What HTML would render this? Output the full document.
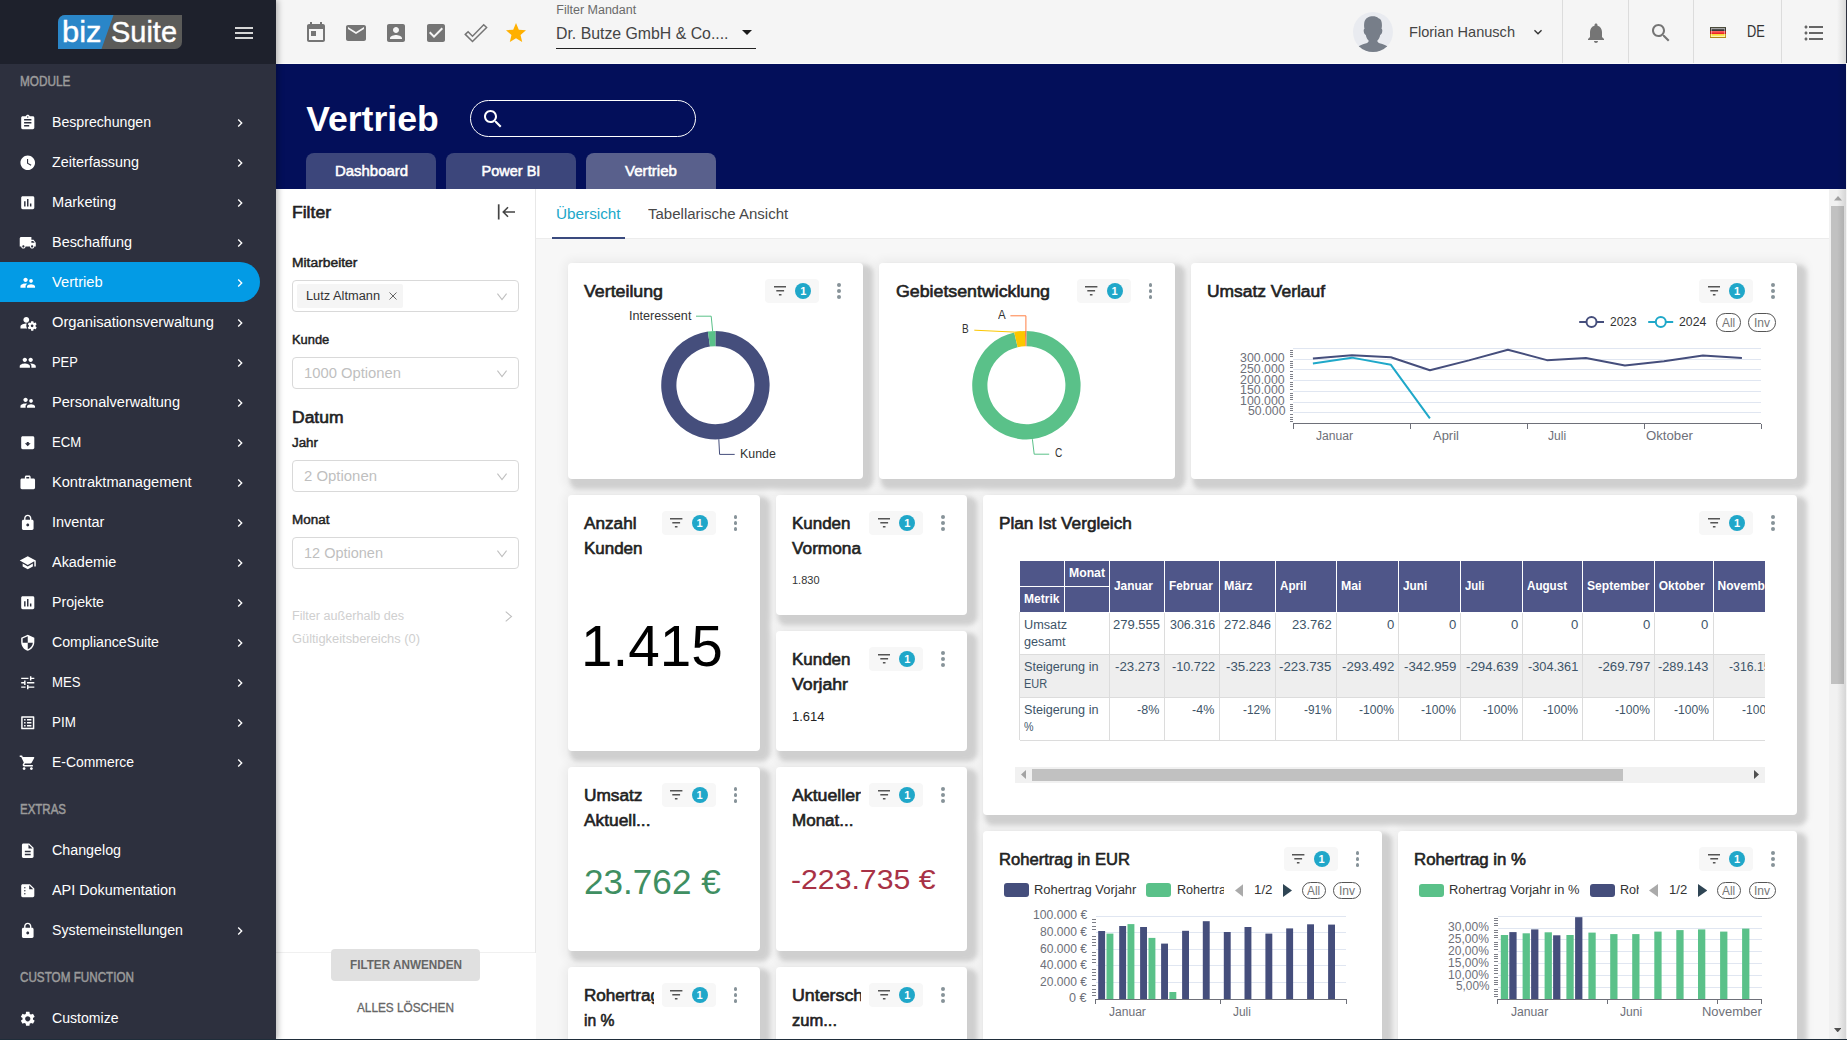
<!DOCTYPE html>
<html><head><meta charset="utf-8"><title>Vertrieb</title><style>
html,body{margin:0;padding:0;overflow:hidden}
#root{position:absolute;left:0;top:0;width:1847px;height:1040px;overflow:hidden}
body{width:1847px;height:1040px;overflow:hidden;position:relative;background:#f7f7f7;font-family:"Liberation Sans",sans-serif;}
.a{position:absolute;display:block}
.t{position:absolute;white-space:pre;transform-origin:0 50%;display:block}
.card{position:absolute;background:#fff;border-radius:4px;box-shadow:6px 6px 4px 4px rgba(0,0,0,0.13), 3px 3px 8px 8px rgba(0,0,0,0.04)}
</style></head><body><div id="root">
<div class="a" style="left:276px;top:0px;width:1571px;height:64px;background:#f5f5f5;"></div>
<div class="a" style="left:276px;top:64px;width:1571px;height:125px;background:#030f5a;"></div>
<div class="a" style="left:276px;top:189px;width:260px;height:851px;background:#fff;"></div>
<div class="a" style="left:535px;top:189px;width:1px;height:764px;background:#e8e8e8;"></div>
<div class="a" style="left:536px;top:189px;width:1293px;height:49px;background:#fff;"></div>
<div class="a" style="left:536px;top:238px;width:1293px;height:1px;background:#ececec;"></div>
<div class="a" style="left:0px;top:0px;width:276px;height:1040px;background:#2d303e;box-shadow:2px 0 6px rgba(0,0,0,0.28);z-index:5"></div>
<div class="a" style="left:0;top:0;width:276px;height:1040px;z-index:6">
<div class="a" style="left:0px;top:0px;width:276px;height:64px;background:#1e212c;"></div>
<svg class="a" style="left:58px;top:15px;" width="124" height="34" viewBox="0 0 124 34"><defs><clipPath id="lg"><path d="M7 0H124V27a7 7 0 0 1-7 7H0V7a7 7 0 0 1 7-7z"/></clipPath></defs><g clip-path="url(#lg)"><rect width="124" height="34" fill="#5b5b59"/><path d="M0 0H55.500L43.500 34H0z" fill="#2a86c8"/></g></svg>
<span class="t" style="left:61.60px;top:17.00px;font-size:29.5px;line-height:29.5px;color:#fff;transform:scaleX(1.0472);-webkit-text-stroke:0.400px #fff;">biz</span>
<span class="t" style="left:110.50px;top:17.00px;font-size:29.5px;line-height:29.5px;color:#fff;transform:scaleX(0.9814);-webkit-text-stroke:0.400px #fff;">Suite</span>
<svg class="a" style="left:232.0px;top:21.0px;" width="24" height="24" viewBox="0 0 24 24"><path fill="#d6d6d6" d="M3 18h18v-2H3v2zm0-5h18v-2H3v2zm0-7v2h18V6H3z"/></svg>
<span class="t" style="left:20.30px;top:74.00px;font-size:14px;line-height:14px;color:#9b9b9b;transform:scaleX(0.8413);-webkit-text-stroke:0.50px #9b9b9b;">MODULE</span>
<span class="t" style="left:20.10px;top:802.00px;font-size:14px;line-height:14px;color:#9b9b9b;transform:scaleX(0.8212);-webkit-text-stroke:0.50px #9b9b9b;">EXTRAS</span>
<span class="t" style="left:20.10px;top:970.00px;font-size:14px;line-height:14px;color:#9b9b9b;transform:scaleX(0.8344);-webkit-text-stroke:0.50px #9b9b9b;">CUSTOM FUNCTION</span>
<div class="a" style="left:0px;top:262px;width:260px;height:40px;background:#039be5;border-radius:0 20px 20px 0"></div>
<svg class="a" style="left:19.35px;top:114.05px;" width="17.5" height="17.5" viewBox="0 0 24 24"><path fill="#fff" d="M19 3h-4.18C14.4 1.84 13.3 1 12 1c-1.3 0-2.4.84-2.82 2H5c-1.1 0-2 .9-2 2v14c0 1.1.9 2 2 2h14c1.1 0 2-.9 2-2V5c0-1.1-.9-2-2-2zm-7 0c.55 0 1 .45 1 1s-.45 1-1 1-1-.45-1-1 .45-1 1-1zm2 14H7v-2h7v2zm3-4H7v-2h10v2zm0-4H7V7h10v2z"/></svg>
<span class="t" style="left:52.30px;top:114.00px;font-size:15.5px;line-height:15.5px;color:#fff;transform:scaleX(0.9117);">Besprechungen</span>
<svg class="a" style="left:232.0px;top:115.0px;" width="16" height="16" viewBox="0 0 24 24"><path fill="#fff" d="M10 6L8.59 7.41 13.17 12l-4.58 4.59L10 18l6-6z"/></svg>
<svg class="a" style="left:19.35px;top:154.05px;" width="17.5" height="17.5" viewBox="0 0 24 24"><path fill="#fff" d="M12 2C6.5 2 2 6.5 2 12s4.5 10 10 10 10-4.5 10-10S17.5 2 12 2zm4.2 14.2L11 13V7h1.5v5.2l4.5 2.7-.8 1.3z"/></svg>
<span class="t" style="left:52.30px;top:154.00px;font-size:15.5px;line-height:15.5px;color:#fff;transform:scaleX(0.9263);">Zeiterfassung</span>
<svg class="a" style="left:232.0px;top:155.0px;" width="16" height="16" viewBox="0 0 24 24"><path fill="#fff" d="M10 6L8.59 7.41 13.17 12l-4.58 4.59L10 18l6-6z"/></svg>
<svg class="a" style="left:19.35px;top:194.05px;" width="17.5" height="17.5" viewBox="0 0 24 24"><path fill="#fff" d="M19 3H5c-1.1 0-2 .9-2 2v14c0 1.1.9 2 2 2h14c1.1 0 2-.9 2-2V5c0-1.1-.9-2-2-2zM9 17H7v-7h2v7zm4 0h-2V7h2v10zm4 0h-2v-4h2v4z"/></svg>
<span class="t" style="left:52.30px;top:194.00px;font-size:15.5px;line-height:15.5px;color:#fff;transform:scaleX(0.9403);">Marketing</span>
<svg class="a" style="left:232.0px;top:195.0px;" width="16" height="16" viewBox="0 0 24 24"><path fill="#fff" d="M10 6L8.59 7.41 13.17 12l-4.58 4.59L10 18l6-6z"/></svg>
<svg class="a" style="left:19.35px;top:234.05px;" width="17.5" height="17.5" viewBox="0 0 24 24"><path fill="#fff" d="M20 8h-3V4H3c-1.1 0-2 .9-2 2v11h2c0 1.66 1.34 3 3 3s3-1.34 3-3h6c0 1.66 1.34 3 3 3s3-1.34 3-3h2v-5l-3-4zM6 18.5c-.83 0-1.5-.67-1.5-1.5s.67-1.5 1.5-1.5 1.5.67 1.5 1.5-.67 1.5-1.5 1.5zm13.5-9l1.96 2.5H17V9.5h2.5zm-1.5 9c-.83 0-1.5-.67-1.5-1.5s.67-1.5 1.5-1.5 1.5.67 1.5 1.5-.67 1.5-1.5 1.5z"/></svg>
<span class="t" style="left:52.30px;top:234.00px;font-size:15.5px;line-height:15.5px;color:#fff;transform:scaleX(0.9312);">Beschaffung</span>
<svg class="a" style="left:232.0px;top:235.0px;" width="16" height="16" viewBox="0 0 24 24"><path fill="#fff" d="M10 6L8.59 7.41 13.17 12l-4.58 4.59L10 18l6-6z"/></svg>
<svg class="a" style="left:19.35px;top:274.05px;" width="17.5" height="17.5" viewBox="0 0 24 24"><path fill="#fff" d="M16.5 12c1.38 0 2.49-1.12 2.49-2.5S17.88 7 16.5 7C15.12 7 14 8.12 14 9.5s1.12 2.5 2.5 2.5zM9 11c1.66 0 2.99-1.34 2.99-3S10.66 5 9 5C7.34 5 6 6.34 6 8s1.34 3 3 3zm7.5 3c-1.83 0-5.5.92-5.5 2.75V19h11v-2.25c0-1.83-3.67-2.75-5.5-2.75zM9 13c-2.33 0-7 1.17-7 3.5V19h7v-2.25c0-.85.33-2.34 2.37-3.47C10.5 13.1 9.66 13 9 13z"/></svg>
<span class="t" style="left:52.30px;top:274.00px;font-size:15.5px;line-height:15.5px;color:#fff;transform:scaleX(0.9490);">Vertrieb</span>
<svg class="a" style="left:232.0px;top:275.0px;" width="16" height="16" viewBox="0 0 24 24"><path fill="#fff" d="M10 6L8.59 7.41 13.17 12l-4.58 4.59L10 18l6-6z"/></svg>
<svg class="a" style="left:19.35px;top:314.05px;" width="17.5" height="17.5" viewBox="0 0 24 24"><path fill="#fff" d="M10 12c2.21 0 4-1.79 4-4s-1.790-4-4-4-4 1.790-4 4 1.790 4 4 4zm.67 1.020C10.450 13.010 10.230 13 10 13c-2.670 0-8 1.340-8 4v3h9.260c-.79-1.130-1.260-2.510-1.260-4 0-1.070.25-2.070.67-2.980zM22.700 17.300c.04-.32.07-.64.07-.97s-.03-.66-.07-.98l1.300-1.020c.12-.09.150-.26.080-.4l-1.230-2.130c-.08-.14-.24-.18-.38-.14l-1.530.62c-.320-.25-.66-.45-1.040-.6l-.23-1.630c-.020-.150-.150-.26-.3-.26h-2.460c-.15 0-.28.11-.3.26l-.23 1.630c-.370.15-.720.360-1.040.6l-1.530-.62c-.14-.05-.3 0-.38.14l-1.230 2.130c-.08.130-.04.300.08.4l1.300 1.020c-.04.320-.07.650-.07.980s.03.660.07.980l-1.300 1.020c-.120.09-.15.26-.08.4l1.230 2.130c.08.140.24.180.38.140l1.530-.620c.32.25.66.450 1.040.6l.23 1.630c.2.15.15.26.3.26h2.460c.15 0 .28-.11.3-.26l.23-1.630c.37-.15.72-.36 1.040-.6l1.530.62c.14.05.3 0 .38-.14l1.230-2.130c.08-.13.04-.3-.08-.4l-1.300-1.030zm-4.700.7c-.99 0-1.800-.81-1.800-1.800s.81-1.800 1.800-1.800 1.800.81 1.800 1.800-.81 1.800-1.800 1.800z"/></svg>
<span class="t" style="left:52.30px;top:314.00px;font-size:15.5px;line-height:15.5px;color:#fff;transform:scaleX(0.9496);">Organisationsverwaltung</span>
<svg class="a" style="left:232.0px;top:315.0px;" width="16" height="16" viewBox="0 0 24 24"><path fill="#fff" d="M10 6L8.59 7.41 13.17 12l-4.58 4.59L10 18l6-6z"/></svg>
<svg class="a" style="left:19.35px;top:354.05px;" width="17.5" height="17.5" viewBox="0 0 24 24"><path fill="#fff" d="M16 11c1.66 0 2.990-1.340 2.990-3S17.660 5 16 5c-1.660 0-3 1.340-3 3s1.340 3 3 3zm-8 0c1.660 0 2.990-1.340 2.990-3S9.660 5 8 5C6.340 5 5 6.340 5 8s1.340 3 3 3zm0 2c-2.330 0-7 1.170-7 3.500V19h14v-2.500c0-2.330-4.670-3.500-7-3.500zm8 0c-.29 0-.62.020-.97.050 1.160.84 1.970 1.970 1.970 3.450V19h6v-2.500c0-2.330-4.670-3.500-7-3.500z"/></svg>
<span class="t" style="left:52.30px;top:354.00px;font-size:15.5px;line-height:15.5px;color:#fff;transform:scaleX(0.8318);">PEP</span>
<svg class="a" style="left:232.0px;top:355.0px;" width="16" height="16" viewBox="0 0 24 24"><path fill="#fff" d="M10 6L8.59 7.41 13.17 12l-4.58 4.59L10 18l6-6z"/></svg>
<svg class="a" style="left:19.35px;top:394.05px;" width="17.5" height="17.5" viewBox="0 0 24 24"><path fill="#fff" d="M16.5 12c1.38 0 2.49-1.12 2.49-2.5S17.88 7 16.5 7C15.12 7 14 8.12 14 9.5s1.12 2.5 2.5 2.5zM9 11c1.66 0 2.99-1.34 2.99-3S10.66 5 9 5C7.34 5 6 6.34 6 8s1.34 3 3 3zm7.5 3c-1.83 0-5.5.92-5.5 2.75V19h11v-2.25c0-1.83-3.67-2.75-5.5-2.75zM9 13c-2.33 0-7 1.17-7 3.5V19h7v-2.25c0-.85.33-2.34 2.37-3.47C10.5 13.1 9.66 13 9 13z"/></svg>
<span class="t" style="left:52.30px;top:394.00px;font-size:15.5px;line-height:15.5px;color:#fff;transform:scaleX(0.9402);">Personalverwaltung</span>
<svg class="a" style="left:232.0px;top:395.0px;" width="16" height="16" viewBox="0 0 24 24"><path fill="#fff" d="M10 6L8.59 7.41 13.17 12l-4.58 4.59L10 18l6-6z"/></svg>
<svg class="a" style="left:19.35px;top:434.05px;" width="17.5" height="17.5" viewBox="0 0 24 24"><path fill="#fff" d="M19 3H5c-1.100 0-2 .9-2 2v14c0 1.100.9 2 2 2h14c1.100 0 2-.9 2-2V5c0-1.100-.9-2-2-2zm-7 13.800L8 12.800h2.600v-2h2.800v2H16l-4 4z"/></svg>
<span class="t" style="left:52.30px;top:434.00px;font-size:15.5px;line-height:15.5px;color:#fff;transform:scaleX(0.8475);">ECM</span>
<svg class="a" style="left:232.0px;top:435.0px;" width="16" height="16" viewBox="0 0 24 24"><path fill="#fff" d="M10 6L8.59 7.41 13.17 12l-4.58 4.59L10 18l6-6z"/></svg>
<svg class="a" style="left:19.35px;top:474.05px;" width="17.5" height="17.5" viewBox="0 0 24 24"><path fill="#fff" d="M20 6h-4V4c0-1.110-.89-2-2-2h-4c-1.110 0-2 .89-2 2v2H4c-1.110 0-1.990.89-1.990 2L2 19c0 1.110.89 2 2 2h16c1.110 0 2-.89 2-2V8c0-1.110-.89-2-2-2zm-6 0h-4V4h4v2z"/></svg>
<span class="t" style="left:52.30px;top:474.00px;font-size:15.5px;line-height:15.5px;color:#fff;transform:scaleX(0.9420);">Kontraktmanagement</span>
<svg class="a" style="left:232.0px;top:475.0px;" width="16" height="16" viewBox="0 0 24 24"><path fill="#fff" d="M10 6L8.59 7.41 13.17 12l-4.58 4.59L10 18l6-6z"/></svg>
<svg class="a" style="left:19.35px;top:514.05px;" width="17.5" height="17.5" viewBox="0 0 24 24"><path fill="#fff" d="M18 8h-1V6c0-2.760-2.240-5-5-5S7 3.240 7 6v2H6c-1.100 0-2 .9-2 2v10c0 1.100.9 2 2 2h12c1.100 0 2-.9 2-2V10c0-1.100-.9-2-2-2zm-6 9c-1.100 0-2-.9-2-2s.9-2 2-2 2 .9 2 2-.9 2-2 2zm3.100-9H8.900V6c0-1.710 1.390-3.100 3.100-3.100 1.710 0 3.100 1.390 3.100 3.100v2z"/></svg>
<span class="t" style="left:52.30px;top:514.00px;font-size:15.5px;line-height:15.5px;color:#fff;transform:scaleX(0.9337);">Inventar</span>
<svg class="a" style="left:232.0px;top:515.0px;" width="16" height="16" viewBox="0 0 24 24"><path fill="#fff" d="M10 6L8.59 7.41 13.17 12l-4.58 4.59L10 18l6-6z"/></svg>
<svg class="a" style="left:19.35px;top:554.05px;" width="17.5" height="17.5" viewBox="0 0 24 24"><path fill="#fff" d="M5 13.180v4L12 21l7-3.820v-4L12 17l-7-3.820zM12 3L1 9l11 6 9-4.910V17h2V9L12 3z"/></svg>
<span class="t" style="left:52.30px;top:554.00px;font-size:15.5px;line-height:15.5px;color:#fff;transform:scaleX(0.9313);">Akademie</span>
<svg class="a" style="left:232.0px;top:555.0px;" width="16" height="16" viewBox="0 0 24 24"><path fill="#fff" d="M10 6L8.59 7.41 13.17 12l-4.58 4.59L10 18l6-6z"/></svg>
<svg class="a" style="left:19.35px;top:594.05px;" width="17.5" height="17.5" viewBox="0 0 24 24"><path fill="#fff" d="M19 3H5c-1.1 0-2 .9-2 2v14c0 1.1.9 2 2 2h14c1.1 0 2-.9 2-2V5c0-1.1-.9-2-2-2zM9 17H7v-7h2v7zm4 0h-2V7h2v10zm4 0h-2v-4h2v4z"/></svg>
<span class="t" style="left:52.30px;top:594.00px;font-size:15.5px;line-height:15.5px;color:#fff;transform:scaleX(0.9143);">Projekte</span>
<svg class="a" style="left:232.0px;top:595.0px;" width="16" height="16" viewBox="0 0 24 24"><path fill="#fff" d="M10 6L8.59 7.41 13.17 12l-4.58 4.59L10 18l6-6z"/></svg>
<svg class="a" style="left:19.35px;top:634.05px;" width="17.5" height="17.5" viewBox="0 0 24 24"><path fill="#fff" d="M12 1L3 5v6c0 5.550 3.840 10.740 9 12 5.160-1.260 9-6.450 9-12V5l-9-4zm0 10.990h7c-.53 4.120-3.280 7.790-7 8.940V12H5V6.300l7-3.110v8.800z"/></svg>
<span class="t" style="left:52.30px;top:634.00px;font-size:15.5px;line-height:15.5px;color:#fff;transform:scaleX(0.9131);">ComplianceSuite</span>
<svg class="a" style="left:232.0px;top:635.0px;" width="16" height="16" viewBox="0 0 24 24"><path fill="#fff" d="M10 6L8.59 7.41 13.17 12l-4.58 4.59L10 18l6-6z"/></svg>
<svg class="a" style="left:19.35px;top:674.05px;" width="17.5" height="17.5" viewBox="0 0 24 24"><path fill="#fff" d="M3 17v2h6v-2H3zM3 5v2h10V5H3zm10 16v-2h8v-2h-8v-2h-2v6h2zM7 9v2H3v2h4v2h2V9H7zm14 4v-2H11v2h10zm-6-4h2V7h4V5h-4V3h-2v6z"/></svg>
<span class="t" style="left:52.30px;top:674.00px;font-size:15.5px;line-height:15.5px;color:#fff;transform:scaleX(0.8484);">MES</span>
<svg class="a" style="left:232.0px;top:675.0px;" width="16" height="16" viewBox="0 0 24 24"><path fill="#fff" d="M10 6L8.59 7.41 13.17 12l-4.58 4.59L10 18l6-6z"/></svg>
<svg class="a" style="left:19.35px;top:714.05px;" width="17.5" height="17.5" viewBox="0 0 24 24"><path fill="#fff" d="M19 5v14H5V5h14m1.100-2H3.900c-.5 0-.9.4-.9.9v16.200c0 .4.4.9.9.9h16.200c.4 0 .9-.5.9-.9V3.900c0-.5-.5-.9-.9-.9zM11 7h6v2h-6V7zm0 4h6v2h-6v-2zm0 4h6v2h-6zM7 7h2v2H7zm0 4h2v2H7zm0 4h2v2H7z"/></svg>
<span class="t" style="left:52.30px;top:714.00px;font-size:15.5px;line-height:15.5px;color:#fff;transform:scaleX(0.8635);">PIM</span>
<svg class="a" style="left:232.0px;top:715.0px;" width="16" height="16" viewBox="0 0 24 24"><path fill="#fff" d="M10 6L8.59 7.41 13.17 12l-4.58 4.59L10 18l6-6z"/></svg>
<svg class="a" style="left:19.35px;top:754.05px;" width="17.5" height="17.5" viewBox="0 0 24 24"><path fill="#fff" d="M7 18c-1.100 0-1.990.9-1.990 2S5.900 22 7 22s2-.9 2-2-.9-2-2-2zM1 2v2h2l3.600 7.590-1.350 2.450c-.16.28-.25.61-.25.96 0 1.100.9 2 2 2h12v-2H7.420c-.14 0-.25-.11-.25-.25l.03-.12.9-1.630h7.450c.75 0 1.410-.41 1.750-1.030l3.580-6.490c.08-.14.12-.31.12-.48 0-.55-.45-1-1-1H5.210l-.94-2H1zm16 16c-1.100 0-1.990.9-1.990 2s.89 2 1.990 2 2-.9 2-2-.9-2-2-2z"/></svg>
<span class="t" style="left:52.30px;top:754.00px;font-size:15.5px;line-height:15.5px;color:#fff;transform:scaleX(0.8982);">E-Commerce</span>
<svg class="a" style="left:232.0px;top:755.0px;" width="16" height="16" viewBox="0 0 24 24"><path fill="#fff" d="M10 6L8.59 7.41 13.17 12l-4.58 4.59L10 18l6-6z"/></svg>
<svg class="a" style="left:19.35px;top:842.05px;" width="17.5" height="17.5" viewBox="0 0 24 24"><path fill="#fff" d="M14 2H6c-1.100 0-1.990.9-1.990 2L4 20c0 1.100.89 2 1.990 2H18c1.100 0 2-.9 2-2V8l-6-6zm2 16H8v-2h8v2zm0-4H8v-2h8v2zm-3-5V3.500L18.500 9H13z"/></svg>
<span class="t" style="left:52.30px;top:842.00px;font-size:15.5px;line-height:15.5px;color:#fff;transform:scaleX(0.9202);">Changelog</span>
<svg class="a" style="left:19.35px;top:882.05px;" width="17.5" height="17.5" viewBox="0 0 24 24"><path fill="#fff" d="M15 3H5c-1.100 0-1.990.9-1.990 2L3 19c0 1.100.89 2 1.990 2H19c1.100 0 2-.9 2-2V9l-6-6zM8 17c-.55 0-1-.45-1-1s.45-1 1-1 1 .45 1 1-.45 1-1 1zm0-4c-.55 0-1-.45-1-1s.45-1 1-1 1 .45 1 1-.45 1-1 1zm0-4c-.55 0-1-.45-1-1s.45-1 1-1 1 .45 1 1-.45 1-1 1zm6 1V4.500l5.500 5.500H14z"/></svg>
<span class="t" style="left:52.30px;top:882.00px;font-size:15.5px;line-height:15.5px;color:#fff;transform:scaleX(0.9285);">API Dokumentation</span>
<svg class="a" style="left:19.35px;top:922.05px;" width="17.5" height="17.5" viewBox="0 0 24 24"><path fill="#fff" d="M18 8h-1V6c0-2.760-2.240-5-5-5S7 3.240 7 6v2H6c-1.100 0-2 .9-2 2v10c0 1.100.9 2 2 2h12c1.100 0 2-.9 2-2V10c0-1.100-.9-2-2-2zm-6 9c-1.100 0-2-.9-2-2s.9-2 2-2 2 .9 2 2-.9 2-2 2zm3.100-9H8.900V6c0-1.710 1.390-3.100 3.100-3.100 1.710 0 3.100 1.390 3.100 3.100v2z"/></svg>
<span class="t" style="left:52.30px;top:922.00px;font-size:15.5px;line-height:15.5px;color:#fff;transform:scaleX(0.9159);">Systemeinstellungen</span>
<svg class="a" style="left:232.0px;top:923.0px;" width="16" height="16" viewBox="0 0 24 24"><path fill="#fff" d="M10 6L8.59 7.41 13.17 12l-4.58 4.59L10 18l6-6z"/></svg>
<svg class="a" style="left:19.35px;top:1010.05px;" width="17.5" height="17.5" viewBox="0 0 24 24"><path fill="#fff" d="M19.140 12.940c.04-.3.06-.61.06-.94 0-.32-.02-.64-.07-.94l2.030-1.580c.18-.14.23-.41.12-.61l-1.920-3.320c-.12-.22-.37-.29-.59-.22l-2.390.96c-.5-.38-1.030-.7-1.620-.94l-.36-2.540c-.04-.24-.24-.41-.48-.41h-3.840c-.24 0-.43.17-.47.41l-.36 2.540c-.59.24-1.130.57-1.620.94l-2.390-.96c-.22-.08-.47 0-.59.22L2.740 8.870c-.12.21-.08.47.12.61l2.030 1.580c-.05.3-.09.63-.09.94s.02.64.07.94l-2.030 1.580c-.18.14-.23.41-.12.61l1.920 3.320c.12.22.37.29.59.22l2.390-.96c.5.38 1.030.7 1.620.94l.36 2.540c.05.24.24.41.48.41h3.840c.24 0 .44-.17.47-.41l.36-2.540c.59-.24 1.130-.56 1.620-.94l2.390.96c.22.08.47 0 .59-.22l1.920-3.320c.12-.22.07-.47-.12-.61l-2.010-1.580zM12 15.600c-1.980 0-3.600-1.620-3.600-3.600s1.620-3.600 3.600-3.600 3.600 1.620 3.600 3.600-1.620 3.600-3.600 3.600z"/></svg>
<span class="t" style="left:52.30px;top:1010.00px;font-size:15.5px;line-height:15.5px;color:#fff;transform:scaleX(0.9082);">Customize</span>
</div>
<svg class="a" style="left:304.0px;top:21.0px;" width="24" height="24" viewBox="0 0 24 24"><path fill="#757575" d="M19 3h-1V1h-2v2H8V1H6v2H5c-1.11 0-1.99.9-1.99 2L3 19c0 1.1.89 2 2 2h14c1.1 0 2-.9 2-2V5c0-1.1-.9-2-2-2zm0 16H5V8h14v11zM7 10h5v5H7z"/></svg>
<svg class="a" style="left:344.0px;top:21.0px;" width="24" height="24" viewBox="0 0 24 24"><path fill="#757575" d="M20 4H4c-1.1 0-1.99.9-1.99 2L2 18c0 1.1.9 2 2 2h16c1.1 0 2-.9 2-2V6c0-1.1-.9-2-2-2zm0 4l-8 5-8-5V6l8 5 8-5v2z"/></svg>
<svg class="a" style="left:384.0px;top:21.0px;" width="24" height="24" viewBox="0 0 24 24"><path fill="#757575" d="M3 5v14c0 1.1.89 2 2 2h14c1.1 0 2-.9 2-2V5c0-1.1-.9-2-2-2H5c-1.11 0-2 .9-2 2zm12 4c0 1.66-1.34 3-3 3s-3-1.34-3-3 1.34-3 3-3 3 1.34 3 3zm-9 8c0-2 4-3.1 6-3.1s6 1.1 6 3.1v1H6v-1z"/></svg>
<svg class="a" style="left:424.0px;top:21.0px;" width="24" height="24" viewBox="0 0 24 24"><path fill="#757575" d="M19 3H5c-1.11 0-2 .9-2 2v14c0 1.1.89 2 2 2h14c1.11 0 2-.9 2-2V5c0-1.1-.89-2-2-2zm-9 14l-5-5 1.41-1.41L10 14.17l7.59-7.59L19 8l-9 9z"/></svg>
<svg class="a" style="left:464px;top:21px;" width="24" height="24" viewBox="0 0 24 24"><path d="M1.300 13.400L4.100 10.800 8.500 15.200 19.700 3.800 22.600 6.500 8.500 20.500z" fill="none" stroke="#757575" stroke-width="1.500" stroke-linejoin="miter"/></svg>
<svg class="a" style="left:504.0px;top:21.0px;" width="24" height="24" viewBox="0 0 24 24"><path fill="#ffb000" d="M12 17.27L18.18 21l-1.64-7.03L22 9.24l-7.19-.61L12 2 9.19 8.63 2 9.24l5.46 4.73L5.82 21z"/></svg>
<span class="t" style="left:556.30px;top:4.00px;font-size:12.5px;line-height:12.5px;color:#6a6a6a;">Filter Mandant</span>
<span class="t" style="left:556.30px;top:26.00px;font-size:16px;line-height:16px;color:#444;transform:scaleX(0.9898);">Dr. Butze GmbH &amp; Co....</span>
<svg class="a" style="left:742px;top:29.8px;" width="10" height="5" viewBox="0 0 10 5"><path d="M0 0h10L5 5z" fill="#1a1a1a"/></svg>
<div class="a" style="left:556px;top:48px;width:200px;height:1px;background:#222;"></div>
<svg class="a" style="left:1353px;top:12px;" width="40" height="40" viewBox="0 0 40 40"><defs><clipPath id="av"><circle cx="20" cy="20" r="20"/></clipPath></defs><circle cx="20" cy="20" r="20" fill="#e9ebf0"/><g clip-path="url(#av)" fill="#777e89"><path d="M20 4.300C16 4.300 12 6.200 11.300 10.500C10.900 13 11 15 11.500 16.800C10.600 17.200 10.600 18.500 10.800 19.800C11 21.500 11.800 22.600 12.800 23C13.300 25.300 14.200 27.200 15.600 28.600L15.600 29.500C14.800 30.800 13.600 31.300 12.500 31.600C10 32.400 7.500 33.300 5.500 34.600L3 37V41H37V37L34.500 34.600C32.500 33.300 30 32.400 27.500 31.600C26.400 31.300 25.200 30.800 24.400 29.500L24.400 28.600C25.800 27.200 26.700 25.300 27.200 23C28.200 22.600 29 21.500 29.200 19.800C29.400 18.500 29.400 17.200 28.500 16.800C29 15 29.100 13 28.700 10.500C28.400 8 27 6.500 25.500 6.200C24 4.900 22 4.300 20 4.300Z"/></g></svg>
<span class="t" style="left:1408.50px;top:24.00px;font-size:15px;line-height:15px;color:#454545;transform:scaleX(0.9705);">Florian Hanusch</span>
<svg class="a" style="left:1530.0px;top:24.299999999999997px;" width="16" height="16" viewBox="0 0 24 24"><path fill="#333" d="M16.59 8.59L12 13.17 7.41 8.59 6 10l6 6 6-6z"/></svg>
<div class="a" style="left:1562px;top:0px;width:1px;height:64px;background:#dcdcdc;"></div>
<div class="a" style="left:1628px;top:0px;width:1px;height:64px;background:#dcdcdc;"></div>
<div class="a" style="left:1693px;top:0px;width:1px;height:64px;background:#dcdcdc;"></div>
<div class="a" style="left:1781px;top:0px;width:1px;height:64px;background:#dcdcdc;"></div>
<svg class="a" style="left:1584.0px;top:21.0px;" width="24" height="24" viewBox="0 0 24 24"><path fill="#757575" d="M12 22c1.1 0 2-.9 2-2h-4c0 1.1.89 2 2 2zm6-6v-5c0-3.07-1.64-5.64-4.5-6.32V4c0-.83-.67-1.5-1.5-1.5s-1.5.67-1.5 1.5v.68C7.63 5.36 6 7.92 6 11v5l-2 2v1h16v-1l-2-2z"/></svg>
<svg class="a" style="left:1649.0px;top:21.4px;" width="24" height="24" viewBox="0 0 24 24"><path fill="#757575" d="M15.5 14h-.79l-.28-.27C15.41 12.59 16 11.11 16 9.5 16 5.91 13.09 3 9.5 3S3 5.91 3 9.5 5.91 16 9.5 16c1.61 0 3.09-.59 4.23-1.57l.27.28v.79l5 4.99L20.49 19l-4.99-5zm-6 0C7.01 14 5 11.99 5 9.5S7.01 5 9.5 5 14 7.01 14 9.5 11.99 14 9.5 14z"/></svg>
<svg class="a" style="left:1710px;top:27px;" width="16" height="11" viewBox="0 0 16 11"><defs><linearGradient id="fk" x1="0" y1="0" x2="0" y2="1"><stop offset="0" stop-color="#7a7a7a"/><stop offset="1" stop-color="#2a2a2a"/></linearGradient><linearGradient id="fr" x1="0" y1="0" x2="0" y2="1"><stop offset="0" stop-color="#ff6a6a"/><stop offset="1" stop-color="#ea1a1a"/></linearGradient><linearGradient id="fy" x1="0" y1="0" x2="0" y2="1"><stop offset="0" stop-color="#f6d62a"/><stop offset="1" stop-color="#fff48a"/></linearGradient></defs><rect width="16" height="11" fill="#4b4b3b"/><rect y="1" width="16" height="3" fill="#3a3a34"/><rect y="4" width="16" height="3" fill="#b3241c"/><rect y="7" width="16" height="3" fill="#c49a22"/><rect y="10" width="16" height="1" fill="#b0861a"/><rect x="1" y="1" width="14" height="3" fill="url(#fk)"/><rect x="1" y="4" width="14" height="3" fill="url(#fr)"/><rect x="1" y="7" width="14" height="3" fill="url(#fy)"/><rect x="1.500" y="1.500" width="13" height="8" fill="none" stroke="rgba(255,255,255,0.380)" stroke-width="1"/></svg>
<span class="t" style="left:1747.00px;top:24.00px;font-size:16px;line-height:16px;color:#333;transform:scaleX(0.8006);">DE</span>
<svg class="a" style="left:1802.0px;top:21.0px;" width="24" height="24" viewBox="0 0 24 24"><path fill="#666" d="M4 10.5c-.83 0-1.5.67-1.5 1.5s.67 1.5 1.5 1.5 1.5-.67 1.5-1.5-.67-1.5-1.5-1.5zm0-6c-.83 0-1.5.67-1.5 1.5S3.17 7.5 4 7.5 5.5 6.83 5.5 6 4.83 4.5 4 4.5zm0 12c-.83 0-1.5.68-1.5 1.5s.68 1.5 1.5 1.5 1.5-.68 1.5-1.5-.67-1.5-1.5-1.5zM7 19h14v-2H7v2zm0-6h14v-2H7v2zm0-8v2h14V5H7z"/></svg>
<div class="a" style="left:1837px;top:0px;width:9px;height:1040px;background:linear-gradient(90deg,rgba(0,0,0,0),rgba(0,0,0,0.115));z-index:20"></div>
<div class="a" style="left:1846px;top:0px;width:1px;height:63px;background:#2d303e;z-index:21"></div>
<div class="a" style="left:1846px;top:63px;width:1px;height:977px;background:#f4f4f4;z-index:21"></div>
<div class="a" style="left:276px;top:63px;width:1570px;height:1px;background:#fbfbfb;"></div>
<span class="t" style="left:306.20px;top:102.00px;font-size:35.6px;line-height:35.6px;color:#fff;font-weight:700;">Vertrieb</span>
<div class="a" style="left:470px;top:100px;width:224px;height:35px;border:1px solid #fff;border-radius:19px"></div>
<svg class="a" style="left:480.5px;top:107.2px;" width="24" height="24" viewBox="0 0 24 24"><path fill="#fff" d="M15.5 14h-.79l-.28-.27C15.41 12.59 16 11.11 16 9.5 16 5.91 13.09 3 9.5 3S3 5.91 3 9.5 5.91 16 9.5 16c1.61 0 3.09-.59 4.23-1.57l.27.28v.79l5 4.99L20.49 19l-4.99-5zm-6 0C7.01 14 5 11.99 5 9.5S7.01 5 9.5 5 14 7.01 14 9.5 11.99 14 9.5 14z"/></svg>
<div class="a" style="left:306px;top:153px;width:130px;height:36px;background:#3c467b;border-radius:8px 8px 0 0"></div>
<span class="t" style="left:334.50px;top:164.00px;font-size:14.5px;line-height:14.5px;color:#fff;transform:scaleX(1.0291);-webkit-text-stroke:0.52px #fff;">Dashboard</span>
<div class="a" style="left:446px;top:153px;width:130px;height:36px;background:#3c467b;border-radius:8px 8px 0 0"></div>
<span class="t" style="left:481.50px;top:164.00px;font-size:14.5px;line-height:14.5px;color:#fff;-webkit-text-stroke:0.52px #fff;">Power BI</span>
<div class="a" style="left:586px;top:153px;width:130px;height:36px;background:#59608c;border-radius:8px 8px 0 0"></div>
<span class="t" style="left:625.00px;top:164.00px;font-size:14.5px;line-height:14.5px;color:#fff;transform:scaleX(1.0403);-webkit-text-stroke:0.52px #fff;">Vertrieb</span>
<span class="t" style="left:292.30px;top:205.00px;font-size:16px;line-height:16px;color:#222;transform:scaleX(1.0967);-webkit-text-stroke:0.58px #222;">Filter</span>
<svg class="a" style="left:497px;top:203px;" width="20" height="18" viewBox="0 0 20 18"><path d="M1.700 1.300V16.500" stroke="#444" stroke-width="1.700" fill="none"/><path d="M18 9H6.500M11 4.300L6.300 9 11 13.700" stroke="#444" stroke-width="1.600" fill="none"/></svg>
<span class="t" style="left:292.30px;top:257.00px;font-size:12px;line-height:12px;color:#222;transform:scaleX(1.1537);-webkit-text-stroke:0.43px #222;">Mitarbeiter</span>
<div class="a" style="left:292px;top:280px;width:225px;height:30px;border:1px solid #d9d9d9;border-radius:4px;background:#fff"></div>
<svg class="a" style="left:497px;top:293px;" width="10" height="8" viewBox="0 0 10 8"><path d="M0.400 0.700L5 6.600 9.600 0.700" stroke="#bfbfbf" stroke-width="1.100" fill="none"/></svg>
<div class="a" style="left:297px;top:284px;width:106px;height:24px;background:#f5f5f5;border-radius:2px"></div>
<span class="t" style="left:306.20px;top:290.00px;font-size:12.5px;line-height:12.5px;color:#333;transform:scaleX(1.0240);">Lutz Altmann</span>
<svg class="a" style="left:389px;top:292px;" width="8" height="8" viewBox="0 0 8 8"><path d="M0.500 0.500L7.500 7.500M7.500 0.500L0.500 7.500" stroke="#666" stroke-width="1" fill="none"/></svg>
<span class="t" style="left:292.30px;top:334.00px;font-size:12px;line-height:12px;color:#222;transform:scaleX(1.0748);-webkit-text-stroke:0.43px #222;">Kunde</span>
<div class="a" style="left:292px;top:357px;width:225px;height:30px;border:1px solid #d9d9d9;border-radius:4px;background:#fff"></div>
<svg class="a" style="left:497px;top:370px;" width="10" height="8" viewBox="0 0 10 8"><path d="M0.400 0.700L5 6.600 9.600 0.700" stroke="#bfbfbf" stroke-width="1.100" fill="none"/></svg>
<span class="t" style="left:304.40px;top:366.00px;font-size:14px;line-height:14px;color:#bfbfbf;transform:scaleX(1.0560);">1000 Optionen</span>
<span class="t" style="left:292.00px;top:410.00px;font-size:16px;line-height:16px;color:#222;transform:scaleX(1.0928);-webkit-text-stroke:0.58px #222;">Datum</span>
<span class="t" style="left:292.30px;top:437.00px;font-size:12px;line-height:12px;color:#222;transform:scaleX(1.1138);-webkit-text-stroke:0.43px #222;">Jahr</span>
<div class="a" style="left:292px;top:460px;width:225px;height:30px;border:1px solid #d9d9d9;border-radius:4px;background:#fff"></div>
<svg class="a" style="left:497px;top:473px;" width="10" height="8" viewBox="0 0 10 8"><path d="M0.400 0.700L5 6.600 9.600 0.700" stroke="#bfbfbf" stroke-width="1.100" fill="none"/></svg>
<span class="t" style="left:304.40px;top:469.00px;font-size:14px;line-height:14px;color:#bfbfbf;transform:scaleX(1.0657);">2 Optionen</span>
<span class="t" style="left:292.30px;top:514.00px;font-size:12px;line-height:12px;color:#222;transform:scaleX(1.1211);-webkit-text-stroke:0.43px #222;">Monat</span>
<div class="a" style="left:292px;top:537px;width:225px;height:30px;border:1px solid #d9d9d9;border-radius:4px;background:#fff"></div>
<svg class="a" style="left:497px;top:550px;" width="10" height="8" viewBox="0 0 10 8"><path d="M0.400 0.700L5 6.600 9.600 0.700" stroke="#bfbfbf" stroke-width="1.100" fill="none"/></svg>
<span class="t" style="left:304.40px;top:546.00px;font-size:14px;line-height:14px;color:#bfbfbf;transform:scaleX(1.0354);">12 Optionen</span>
<span class="t" style="left:292.00px;top:610.00px;font-size:12px;line-height:12px;color:#cfcfcf;transform:scaleX(1.0495);">Filter außerhalb des</span>
<span class="t" style="left:292.00px;top:633.00px;font-size:12px;line-height:12px;color:#cfcfcf;transform:scaleX(1.0721);">Gültigkeitsbereichs (0)</span>
<svg class="a" style="left:505px;top:611px;" width="8" height="11" viewBox="0 0 8 11"><path d="M0.700 0.700L6.500 5.500 0.700 10.300" stroke="#bfbfbf" stroke-width="1.100" fill="none"/></svg>
<div class="a" style="left:276px;top:952px;width:259px;height:1px;background:#f0f0f0;"></div>
<div class="a" style="left:331px;top:949px;width:149px;height:32px;background:#e0e0e0;border-radius:4px"></div>
<span class="t" style="left:349.50px;top:959.00px;font-size:12px;line-height:12px;color:#666;font-weight:700;transform:scaleX(0.9768);">FILTER ANWENDEN</span>
<span class="t" style="left:357.00px;top:1002.00px;font-size:12px;line-height:12px;color:#666;transform:scaleX(0.9826);-webkit-text-stroke:0.300px #666;">ALLES LÖSCHEN</span>
<span class="t" style="left:556.40px;top:207.00px;font-size:14px;line-height:14px;color:#20a7c9;transform:scaleX(1.0923);">Übersicht</span>
<div class="a" style="left:552px;top:236.5px;width:73px;height:2px;background:#3a4a7e;"></div>
<span class="t" style="left:647.80px;top:207.00px;font-size:14px;line-height:14px;color:#484848;transform:scaleX(1.0723);">Tabellarische Ansicht</span>
<div class="a" style="left:1829px;top:190px;width:17px;height:850px;background:#f1f1f1;"></div>
<div class="a" style="left:1831px;top:206px;width:13px;height:478px;background:#c1c1c1;"></div>
<svg class="a" style="left:1833.5px;top:195.5px;" width="8" height="5" viewBox="0 0 8 5"><path d="M0 4.500L4 0 8 4.500z" fill="#a3a3a3"/></svg>
<svg class="a" style="left:1833.8px;top:1027.8px;" width="7.4" height="4.4" viewBox="0 0 7.4 4.4"><path d="M0 0L3.700 4.400 7.400 0z" fill="#505050"/></svg>
<div class="card" style="left:568px;top:263px;width:295.25px;height:215.5px"></div>
<div class="a" style="left:765.25px;top:279px;width:54px;height:24px;background:#f7f7f7;border-radius:4px"></div>
<svg class="a" style="left:774.05px;top:286.4px;" width="12.4" height="10" viewBox="0 0 12.4 10"><path d="M0 0.800H12.400M2.300 4.800H10.100M4.900 8.800H7.500" stroke="#555" stroke-width="1.500" fill="none"/></svg>
<div class="a" style="left:795.25px;top:283px;width:16px;height:16px;border-radius:8px;background:#20a7c9"></div>
<span class="t" style="left:800.19px;top:286.00px;font-size:11px;line-height:11px;color:#fff;font-weight:700;">1</span>
<div class="a" style="left:837.35px;top:283.40px;width:3.800px;height:3.800px;border-radius:2px;background:#879399"></div>
<div class="a" style="left:837.35px;top:289.10px;width:3.800px;height:3.800px;border-radius:2px;background:#879399"></div>
<div class="a" style="left:837.35px;top:294.80px;width:3.800px;height:3.800px;border-radius:2px;background:#879399"></div>
<span class="t" style="left:584.30px;top:284.00px;font-size:16px;line-height:16px;color:#222;transform:scaleX(1.1100);-webkit-text-stroke:0.58px #222;">Verteilung</span>
<div class="card" style="left:879.25px;top:263px;width:295.25px;height:215.5px"></div>
<div class="a" style="left:1076.5px;top:279px;width:54px;height:24px;background:#f7f7f7;border-radius:4px"></div>
<svg class="a" style="left:1085.3px;top:286.4px;" width="12.4" height="10" viewBox="0 0 12.4 10"><path d="M0 0.800H12.400M2.300 4.800H10.100M4.900 8.800H7.500" stroke="#555" stroke-width="1.500" fill="none"/></svg>
<div class="a" style="left:1106.5px;top:283px;width:16px;height:16px;border-radius:8px;background:#20a7c9"></div>
<span class="t" style="left:1111.44px;top:286.00px;font-size:11px;line-height:11px;color:#fff;font-weight:700;">1</span>
<div class="a" style="left:1148.6px;top:283.40px;width:3.800px;height:3.800px;border-radius:2px;background:#879399"></div>
<div class="a" style="left:1148.6px;top:289.10px;width:3.800px;height:3.800px;border-radius:2px;background:#879399"></div>
<div class="a" style="left:1148.6px;top:294.80px;width:3.800px;height:3.800px;border-radius:2px;background:#879399"></div>
<span class="t" style="left:895.55px;top:284.00px;font-size:16px;line-height:16px;color:#222;transform:scaleX(1.1099);-webkit-text-stroke:0.58px #222;">Gebietsentwicklung</span>
<div class="card" style="left:1190.5px;top:263px;width:606.5px;height:215.5px"></div>
<div class="a" style="left:1699.0px;top:279px;width:54px;height:24px;background:#f7f7f7;border-radius:4px"></div>
<svg class="a" style="left:1707.8px;top:286.4px;" width="12.4" height="10" viewBox="0 0 12.4 10"><path d="M0 0.800H12.400M2.300 4.800H10.100M4.900 8.800H7.500" stroke="#555" stroke-width="1.500" fill="none"/></svg>
<div class="a" style="left:1729.0px;top:283px;width:16px;height:16px;border-radius:8px;background:#20a7c9"></div>
<span class="t" style="left:1733.94px;top:286.00px;font-size:11px;line-height:11px;color:#fff;font-weight:700;">1</span>
<div class="a" style="left:1771.1px;top:283.40px;width:3.800px;height:3.800px;border-radius:2px;background:#879399"></div>
<div class="a" style="left:1771.1px;top:289.10px;width:3.800px;height:3.800px;border-radius:2px;background:#879399"></div>
<div class="a" style="left:1771.1px;top:294.80px;width:3.800px;height:3.800px;border-radius:2px;background:#879399"></div>
<span class="t" style="left:1206.80px;top:284.00px;font-size:16px;line-height:16px;color:#222;transform:scaleX(1.0877);-webkit-text-stroke:0.58px #222;">Umsatz Verlauf</span>
<div class="card" style="left:568px;top:495px;width:191.5px;height:255.5px"></div>
<div class="a" style="left:661.5px;top:511px;width:54px;height:24px;background:#f7f7f7;border-radius:4px"></div>
<svg class="a" style="left:670.3px;top:518.4px;" width="12.4" height="10" viewBox="0 0 12.4 10"><path d="M0 0.800H12.400M2.300 4.800H10.100M4.900 8.800H7.500" stroke="#555" stroke-width="1.500" fill="none"/></svg>
<div class="a" style="left:691.5px;top:515px;width:16px;height:16px;border-radius:8px;background:#20a7c9"></div>
<span class="t" style="left:696.44px;top:518.00px;font-size:11px;line-height:11px;color:#fff;font-weight:700;">1</span>
<div class="a" style="left:733.6px;top:515.40px;width:3.800px;height:3.800px;border-radius:2px;background:#879399"></div>
<div class="a" style="left:733.6px;top:521.10px;width:3.800px;height:3.800px;border-radius:2px;background:#879399"></div>
<div class="a" style="left:733.6px;top:526.80px;width:3.800px;height:3.800px;border-radius:2px;background:#879399"></div>
<span class="t" style="left:584.30px;top:516.00px;font-size:16px;line-height:16px;color:#222;transform:scaleX(1.0731);-webkit-text-stroke:0.58px #222;">Anzahl</span>
<span class="t" style="left:584.30px;top:541.00px;font-size:16px;line-height:16px;color:#222;transform:scaleX(1.0603);-webkit-text-stroke:0.58px #222;">Kunden</span>
<div class="card" style="left:775.75px;top:495px;width:191.5px;height:119.5px"></div>
<div class="a" style="left:869.25px;top:511px;width:54px;height:24px;background:#f7f7f7;border-radius:4px"></div>
<svg class="a" style="left:878.05px;top:518.4px;" width="12.4" height="10" viewBox="0 0 12.4 10"><path d="M0 0.800H12.400M2.300 4.800H10.100M4.900 8.800H7.500" stroke="#555" stroke-width="1.500" fill="none"/></svg>
<div class="a" style="left:899.25px;top:515px;width:16px;height:16px;border-radius:8px;background:#20a7c9"></div>
<span class="t" style="left:904.19px;top:518.00px;font-size:11px;line-height:11px;color:#fff;font-weight:700;">1</span>
<div class="a" style="left:941.35px;top:515.40px;width:3.800px;height:3.800px;border-radius:2px;background:#879399"></div>
<div class="a" style="left:941.35px;top:521.10px;width:3.800px;height:3.800px;border-radius:2px;background:#879399"></div>
<div class="a" style="left:941.35px;top:526.80px;width:3.800px;height:3.800px;border-radius:2px;background:#879399"></div>
<span class="t" style="left:792.05px;top:516.00px;font-size:16px;line-height:16px;color:#222;transform:scaleX(1.0603);-webkit-text-stroke:0.58px #222;">Kunden</span>
<span class="t" style="left:792.05px;top:541.00px;font-size:16px;line-height:16px;color:#222;transform:scaleX(1.0773);-webkit-text-stroke:0.58px #222;">Vormona</span>
<div class="card" style="left:775.75px;top:631px;width:191.5px;height:119.5px"></div>
<div class="a" style="left:869.25px;top:647px;width:54px;height:24px;background:#f7f7f7;border-radius:4px"></div>
<svg class="a" style="left:878.05px;top:654.4px;" width="12.4" height="10" viewBox="0 0 12.4 10"><path d="M0 0.800H12.400M2.300 4.800H10.100M4.900 8.800H7.500" stroke="#555" stroke-width="1.500" fill="none"/></svg>
<div class="a" style="left:899.25px;top:651px;width:16px;height:16px;border-radius:8px;background:#20a7c9"></div>
<span class="t" style="left:904.19px;top:654.00px;font-size:11px;line-height:11px;color:#fff;font-weight:700;">1</span>
<div class="a" style="left:941.35px;top:651.40px;width:3.800px;height:3.800px;border-radius:2px;background:#879399"></div>
<div class="a" style="left:941.35px;top:657.10px;width:3.800px;height:3.800px;border-radius:2px;background:#879399"></div>
<div class="a" style="left:941.35px;top:662.80px;width:3.800px;height:3.800px;border-radius:2px;background:#879399"></div>
<span class="t" style="left:792.05px;top:652.00px;font-size:16px;line-height:16px;color:#222;transform:scaleX(1.0603);-webkit-text-stroke:0.58px #222;">Kunden</span>
<span class="t" style="left:792.05px;top:677.00px;font-size:16px;line-height:16px;color:#222;transform:scaleX(1.1045);-webkit-text-stroke:0.58px #222;">Vorjahr</span>
<div class="card" style="left:983px;top:495px;width:814px;height:319.5px"></div>
<div class="a" style="left:1699px;top:511px;width:54px;height:24px;background:#f7f7f7;border-radius:4px"></div>
<svg class="a" style="left:1707.8px;top:518.4px;" width="12.4" height="10" viewBox="0 0 12.4 10"><path d="M0 0.800H12.400M2.300 4.800H10.100M4.900 8.800H7.500" stroke="#555" stroke-width="1.500" fill="none"/></svg>
<div class="a" style="left:1729px;top:515px;width:16px;height:16px;border-radius:8px;background:#20a7c9"></div>
<span class="t" style="left:1733.94px;top:518.00px;font-size:11px;line-height:11px;color:#fff;font-weight:700;">1</span>
<div class="a" style="left:1771.1px;top:515.40px;width:3.800px;height:3.800px;border-radius:2px;background:#879399"></div>
<div class="a" style="left:1771.1px;top:521.10px;width:3.800px;height:3.800px;border-radius:2px;background:#879399"></div>
<div class="a" style="left:1771.1px;top:526.80px;width:3.800px;height:3.800px;border-radius:2px;background:#879399"></div>
<span class="t" style="left:999.30px;top:516.00px;font-size:16px;line-height:16px;color:#222;transform:scaleX(1.0742);-webkit-text-stroke:0.58px #222;">Plan Ist Vergleich</span>
<div class="card" style="left:568px;top:767px;width:191.5px;height:183.5px"></div>
<div class="a" style="left:661.5px;top:783px;width:54px;height:24px;background:#f7f7f7;border-radius:4px"></div>
<svg class="a" style="left:670.3px;top:790.4px;" width="12.4" height="10" viewBox="0 0 12.4 10"><path d="M0 0.800H12.400M2.300 4.800H10.100M4.900 8.800H7.500" stroke="#555" stroke-width="1.500" fill="none"/></svg>
<div class="a" style="left:691.5px;top:787px;width:16px;height:16px;border-radius:8px;background:#20a7c9"></div>
<span class="t" style="left:696.44px;top:790.00px;font-size:11px;line-height:11px;color:#fff;font-weight:700;">1</span>
<div class="a" style="left:733.6px;top:787.40px;width:3.800px;height:3.800px;border-radius:2px;background:#879399"></div>
<div class="a" style="left:733.6px;top:793.10px;width:3.800px;height:3.800px;border-radius:2px;background:#879399"></div>
<div class="a" style="left:733.6px;top:798.80px;width:3.800px;height:3.800px;border-radius:2px;background:#879399"></div>
<span class="t" style="left:584.30px;top:788.00px;font-size:16px;line-height:16px;color:#222;transform:scaleX(1.0787);-webkit-text-stroke:0.58px #222;">Umsatz</span>
<span class="t" style="left:584.30px;top:813.00px;font-size:16px;line-height:16px;color:#222;transform:scaleX(1.0838);-webkit-text-stroke:0.58px #222;">Aktuell...</span>
<div class="card" style="left:775.75px;top:767px;width:191.5px;height:183.5px"></div>
<div class="a" style="left:869.25px;top:783px;width:54px;height:24px;background:#f7f7f7;border-radius:4px"></div>
<svg class="a" style="left:878.05px;top:790.4px;" width="12.4" height="10" viewBox="0 0 12.4 10"><path d="M0 0.800H12.400M2.300 4.800H10.100M4.900 8.800H7.500" stroke="#555" stroke-width="1.500" fill="none"/></svg>
<div class="a" style="left:899.25px;top:787px;width:16px;height:16px;border-radius:8px;background:#20a7c9"></div>
<span class="t" style="left:904.19px;top:790.00px;font-size:11px;line-height:11px;color:#fff;font-weight:700;">1</span>
<div class="a" style="left:941.35px;top:787.40px;width:3.800px;height:3.800px;border-radius:2px;background:#879399"></div>
<div class="a" style="left:941.35px;top:793.10px;width:3.800px;height:3.800px;border-radius:2px;background:#879399"></div>
<div class="a" style="left:941.35px;top:798.80px;width:3.800px;height:3.800px;border-radius:2px;background:#879399"></div>
<div class="a" style="left:792.05px;top:786.00px;width:69.30px;height:22px;overflow:hidden"><span class="t" style="left:0;top:2px;font-size:16px;line-height:16px;color:#222;transform:scaleX(1.1084);-webkit-text-stroke:0.58px #222;">Aktueller</span></div>
<span class="t" style="left:792.05px;top:813.00px;font-size:16px;line-height:16px;color:#222;transform:scaleX(1.0638);-webkit-text-stroke:0.58px #222;">Monat...</span>
<div class="card" style="left:568px;top:967px;width:191.5px;height:120px"></div>
<div class="a" style="left:661.5px;top:983px;width:54px;height:24px;background:#f7f7f7;border-radius:4px"></div>
<svg class="a" style="left:670.3px;top:990.4px;" width="12.4" height="10" viewBox="0 0 12.4 10"><path d="M0 0.800H12.400M2.300 4.800H10.100M4.900 8.800H7.500" stroke="#555" stroke-width="1.500" fill="none"/></svg>
<div class="a" style="left:691.5px;top:987px;width:16px;height:16px;border-radius:8px;background:#20a7c9"></div>
<span class="t" style="left:696.44px;top:990.00px;font-size:11px;line-height:11px;color:#fff;font-weight:700;">1</span>
<div class="a" style="left:733.6px;top:987.40px;width:3.800px;height:3.800px;border-radius:2px;background:#879399"></div>
<div class="a" style="left:733.6px;top:993.10px;width:3.800px;height:3.800px;border-radius:2px;background:#879399"></div>
<div class="a" style="left:733.6px;top:998.80px;width:3.800px;height:3.800px;border-radius:2px;background:#879399"></div>
<div class="a" style="left:584.30px;top:986.00px;width:69.50px;height:22px;overflow:hidden"><span class="t" style="left:0;top:2px;font-size:16px;line-height:16px;color:#222;transform:scaleX(1.0681);-webkit-text-stroke:0.58px #222;">Rohertrag</span></div>
<span class="t" style="left:584.30px;top:1013.00px;font-size:16px;line-height:16px;color:#222;transform:scaleX(0.9799);-webkit-text-stroke:0.58px #222;">in %</span>
<div class="card" style="left:775.75px;top:967px;width:191.5px;height:120px"></div>
<div class="a" style="left:869.25px;top:983px;width:54px;height:24px;background:#f7f7f7;border-radius:4px"></div>
<svg class="a" style="left:878.05px;top:990.4px;" width="12.4" height="10" viewBox="0 0 12.4 10"><path d="M0 0.800H12.400M2.300 4.800H10.100M4.900 8.800H7.500" stroke="#555" stroke-width="1.500" fill="none"/></svg>
<div class="a" style="left:899.25px;top:987px;width:16px;height:16px;border-radius:8px;background:#20a7c9"></div>
<span class="t" style="left:904.19px;top:990.00px;font-size:11px;line-height:11px;color:#fff;font-weight:700;">1</span>
<div class="a" style="left:941.35px;top:987.40px;width:3.800px;height:3.800px;border-radius:2px;background:#879399"></div>
<div class="a" style="left:941.35px;top:993.10px;width:3.800px;height:3.800px;border-radius:2px;background:#879399"></div>
<div class="a" style="left:941.35px;top:998.80px;width:3.800px;height:3.800px;border-radius:2px;background:#879399"></div>
<div class="a" style="left:792.05px;top:986.00px;width:69.30px;height:22px;overflow:hidden"><span class="t" style="left:0;top:2px;font-size:16px;line-height:16px;color:#222;transform:scaleX(1.1127);-webkit-text-stroke:0.58px #222;">Unterschied</span></div>
<span class="t" style="left:792.05px;top:1013.00px;font-size:16px;line-height:16px;color:#222;transform:scaleX(1.0330);-webkit-text-stroke:0.58px #222;">zum...</span>
<div class="card" style="left:983px;top:831px;width:398.5px;height:260px"></div>
<div class="a" style="left:1283.5px;top:847px;width:54px;height:24px;background:#f7f7f7;border-radius:4px"></div>
<svg class="a" style="left:1292.3px;top:854.4px;" width="12.4" height="10" viewBox="0 0 12.4 10"><path d="M0 0.800H12.400M2.300 4.800H10.100M4.900 8.800H7.500" stroke="#555" stroke-width="1.500" fill="none"/></svg>
<div class="a" style="left:1313.5px;top:851px;width:16px;height:16px;border-radius:8px;background:#20a7c9"></div>
<span class="t" style="left:1318.44px;top:854.00px;font-size:11px;line-height:11px;color:#fff;font-weight:700;">1</span>
<div class="a" style="left:1355.6px;top:851.40px;width:3.800px;height:3.800px;border-radius:2px;background:#879399"></div>
<div class="a" style="left:1355.6px;top:857.10px;width:3.800px;height:3.800px;border-radius:2px;background:#879399"></div>
<div class="a" style="left:1355.6px;top:862.80px;width:3.800px;height:3.800px;border-radius:2px;background:#879399"></div>
<span class="t" style="left:999.30px;top:852.00px;font-size:16px;line-height:16px;color:#222;transform:scaleX(1.0374);-webkit-text-stroke:0.58px #222;">Rohertrag in EUR</span>
<div class="card" style="left:1398px;top:831px;width:399px;height:260px"></div>
<div class="a" style="left:1699px;top:847px;width:54px;height:24px;background:#f7f7f7;border-radius:4px"></div>
<svg class="a" style="left:1707.8px;top:854.4px;" width="12.4" height="10" viewBox="0 0 12.4 10"><path d="M0 0.800H12.400M2.300 4.800H10.100M4.900 8.800H7.500" stroke="#555" stroke-width="1.500" fill="none"/></svg>
<div class="a" style="left:1729px;top:851px;width:16px;height:16px;border-radius:8px;background:#20a7c9"></div>
<span class="t" style="left:1733.94px;top:854.00px;font-size:11px;line-height:11px;color:#fff;font-weight:700;">1</span>
<div class="a" style="left:1771.1px;top:851.40px;width:3.800px;height:3.800px;border-radius:2px;background:#879399"></div>
<div class="a" style="left:1771.1px;top:857.10px;width:3.800px;height:3.800px;border-radius:2px;background:#879399"></div>
<div class="a" style="left:1771.1px;top:862.80px;width:3.800px;height:3.800px;border-radius:2px;background:#879399"></div>
<span class="t" style="left:1414.30px;top:852.00px;font-size:16px;line-height:16px;color:#222;transform:scaleX(1.0495);-webkit-text-stroke:0.58px #222;">Rohertrag in %</span>
<div class="a" style="left:0px;top:1038.7px;width:1847px;height:1.3px;background:#1f2d3a;z-index:30"></div>
<svg class="a" style="left:0;top:0;" width="1847" height="1040" viewBox="0 0 1847 1040"><path d="M715.40 331.00A54.2 54.2 0 1 1 707.86 331.53L709.97 346.58A39 39 0 1 0 715.40 346.20Z" fill="#454e7c"/><path d="M707.86 331.53A54.2 54.2 0 0 1 715.40 331.00L715.40 346.20A39 39 0 0 0 709.97 346.58Z" fill="#5ac189"/><path d="M696 316.200H711.200L712.700 331.500" stroke="#5ac189" stroke-width="1" fill="none"/><path d="M718.800 439.200L719.600 454.400H734.700" stroke="#454e7c" stroke-width="1" fill="none"/><path d="M1026.40 331.00A54.2 54.2 0 1 1 1014.21 332.39L1017.63 347.20A39 39 0 1 0 1026.40 346.20Z" fill="#5ac189"/><path d="M1014.21 332.39A54.2 54.2 0 0 1 1024.89 331.02L1025.31 346.22A39 39 0 0 0 1017.63 347.20Z" fill="#fcc700"/><path d="M1024.89 331.02A54.2 54.2 0 0 1 1026.40 331.00L1026.40 346.20A39 39 0 0 0 1025.31 346.22Z" fill="#ff7f44"/><path d="M1010.400 315.800H1025.900V331.300" stroke="#ff7f44" stroke-width="1" fill="none"/><path d="M974.300 330.200L1014.700 332.100L1021.400 331.700" stroke="#fcc700" stroke-width="1" fill="none"/><path d="M1032.400 439.200L1034.200 454.200H1049.200" stroke="#5ac189" stroke-width="1" fill="none"/></svg>
<span class="t" style="left:628.50px;top:310.00px;font-size:12px;line-height:12px;color:#333;transform:scaleX(1.0509);">Interessent</span>
<span class="t" style="left:740.40px;top:448.00px;font-size:12px;line-height:12px;color:#333;transform:scaleX(1.0316);">Kunde</span>
<span class="t" style="left:997.50px;top:309.00px;font-size:12px;line-height:12px;color:#333;transform:scaleX(0.9606);">A</span>
<span class="t" style="left:962.30px;top:323.00px;font-size:12px;line-height:12px;color:#333;transform:scaleX(0.8359);">B</span>
<span class="t" style="left:1055.00px;top:447.00px;font-size:12px;line-height:12px;color:#333;transform:scaleX(0.8418);">C</span>
<svg class="a" style="left:0;top:0;" width="1847" height="1040" viewBox="0 0 1847 1040"><path d="M1293.4 412.75H1761.4" stroke="#e0e6f1" stroke-width="1" shape-rendering="crispEdges"/><path d="M1293.4 402.00H1761.4" stroke="#e0e6f1" stroke-width="1" shape-rendering="crispEdges"/><path d="M1293.4 391.25H1761.4" stroke="#e0e6f1" stroke-width="1" shape-rendering="crispEdges"/><path d="M1293.4 380.50H1761.4" stroke="#e0e6f1" stroke-width="1" shape-rendering="crispEdges"/><path d="M1293.4 369.75H1761.4" stroke="#e0e6f1" stroke-width="1" shape-rendering="crispEdges"/><path d="M1293.4 359.00H1761.4" stroke="#e0e6f1" stroke-width="1" shape-rendering="crispEdges"/><path d="M1293.4 348.25H1761.4" stroke="#e0e6f1" stroke-width="1" shape-rendering="crispEdges"/><path d="M1290.2 421.35H1293.4" stroke="#7d7f88" stroke-width="1" shape-rendering="crispEdges"/><path d="M1290.2 419.20H1293.4" stroke="#7d7f88" stroke-width="1" shape-rendering="crispEdges"/><path d="M1290.2 417.05H1293.4" stroke="#7d7f88" stroke-width="1" shape-rendering="crispEdges"/><path d="M1290.2 414.90H1293.4" stroke="#7d7f88" stroke-width="1" shape-rendering="crispEdges"/><path d="M1290.2 410.60H1293.4" stroke="#7d7f88" stroke-width="1" shape-rendering="crispEdges"/><path d="M1290.2 408.45H1293.4" stroke="#7d7f88" stroke-width="1" shape-rendering="crispEdges"/><path d="M1290.2 406.30H1293.4" stroke="#7d7f88" stroke-width="1" shape-rendering="crispEdges"/><path d="M1290.2 404.15H1293.4" stroke="#7d7f88" stroke-width="1" shape-rendering="crispEdges"/><path d="M1290.2 399.85H1293.4" stroke="#7d7f88" stroke-width="1" shape-rendering="crispEdges"/><path d="M1290.2 397.70H1293.4" stroke="#7d7f88" stroke-width="1" shape-rendering="crispEdges"/><path d="M1290.2 395.55H1293.4" stroke="#7d7f88" stroke-width="1" shape-rendering="crispEdges"/><path d="M1290.2 393.40H1293.4" stroke="#7d7f88" stroke-width="1" shape-rendering="crispEdges"/><path d="M1290.2 389.10H1293.4" stroke="#7d7f88" stroke-width="1" shape-rendering="crispEdges"/><path d="M1290.2 386.95H1293.4" stroke="#7d7f88" stroke-width="1" shape-rendering="crispEdges"/><path d="M1290.2 384.80H1293.4" stroke="#7d7f88" stroke-width="1" shape-rendering="crispEdges"/><path d="M1290.2 382.65H1293.4" stroke="#7d7f88" stroke-width="1" shape-rendering="crispEdges"/><path d="M1290.2 378.35H1293.4" stroke="#7d7f88" stroke-width="1" shape-rendering="crispEdges"/><path d="M1290.2 376.20H1293.4" stroke="#7d7f88" stroke-width="1" shape-rendering="crispEdges"/><path d="M1290.2 374.05H1293.4" stroke="#7d7f88" stroke-width="1" shape-rendering="crispEdges"/><path d="M1290.2 371.90H1293.4" stroke="#7d7f88" stroke-width="1" shape-rendering="crispEdges"/><path d="M1290.2 367.60H1293.4" stroke="#7d7f88" stroke-width="1" shape-rendering="crispEdges"/><path d="M1290.2 365.45H1293.4" stroke="#7d7f88" stroke-width="1" shape-rendering="crispEdges"/><path d="M1290.2 363.30H1293.4" stroke="#7d7f88" stroke-width="1" shape-rendering="crispEdges"/><path d="M1290.2 361.15H1293.4" stroke="#7d7f88" stroke-width="1" shape-rendering="crispEdges"/><path d="M1290.2 356.85H1293.4" stroke="#7d7f88" stroke-width="1" shape-rendering="crispEdges"/><path d="M1290.2 354.70H1293.4" stroke="#7d7f88" stroke-width="1" shape-rendering="crispEdges"/><path d="M1290.2 352.55H1293.4" stroke="#7d7f88" stroke-width="1" shape-rendering="crispEdges"/><path d="M1290.2 350.40H1293.4" stroke="#7d7f88" stroke-width="1" shape-rendering="crispEdges"/><path d="M1293.4 423.5H1761.4" stroke="#6e7079" stroke-width="1" shape-rendering="crispEdges"/><path d="M1293.40 423.5V428.5" stroke="#6e7079" stroke-width="1" shape-rendering="crispEdges"/><path d="M1410.40 423.5V428.5" stroke="#6e7079" stroke-width="1" shape-rendering="crispEdges"/><path d="M1527.40 423.5V428.5" stroke="#6e7079" stroke-width="1" shape-rendering="crispEdges"/><path d="M1644.40 423.5V428.5" stroke="#6e7079" stroke-width="1" shape-rendering="crispEdges"/><path d="M1761.40 423.5V428.5" stroke="#6e7079" stroke-width="1" shape-rendering="crispEdges"/><polyline points="1312.90,358.39 1351.90,355.34 1390.90,357.27 1429.90,370.29 1468.90,360.40 1507.90,349.76 1546.90,360.15 1585.90,358.06 1624.90,365.49 1663.90,361.33 1702.90,355.53 1741.90,357.93" fill="none" stroke="#454e7c" stroke-width="2" stroke-linejoin="bevel"/><polyline points="1312.90,363.40 1351.90,357.64 1390.90,364.84 1429.90,418.39" fill="none" stroke="#1fa8c9" stroke-width="2" stroke-linejoin="bevel"/><path d="M1579.200 322H1604" stroke="#454e7c" stroke-width="2"/><circle cx="1591.500" cy="322" r="5" fill="#fff" stroke="#454e7c" stroke-width="2"/><path d="M1648.200 322H1673.200" stroke="#1fa8c9" stroke-width="2"/><circle cx="1660.800" cy="322" r="5" fill="#fff" stroke="#1fa8c9" stroke-width="2"/></svg>
<span class="t" style="left:1247.50px;top:405.00px;font-size:12px;line-height:12px;color:#6e7079;transform:scaleX(1.0217);">50.000</span>
<span class="t" style="left:1240.30px;top:395.00px;font-size:12px;line-height:12px;color:#6e7079;transform:scaleX(1.0302);">100.000</span>
<span class="t" style="left:1240.30px;top:384.00px;font-size:12px;line-height:12px;color:#6e7079;transform:scaleX(1.0302);">150.000</span>
<span class="t" style="left:1240.30px;top:374.00px;font-size:12px;line-height:12px;color:#6e7079;transform:scaleX(1.0302);">200.000</span>
<span class="t" style="left:1240.30px;top:363.00px;font-size:12px;line-height:12px;color:#6e7079;transform:scaleX(1.0302);">250.000</span>
<span class="t" style="left:1240.30px;top:352.00px;font-size:12px;line-height:12px;color:#6e7079;transform:scaleX(1.0302);">300.000</span>
<span class="t" style="left:1315.50px;top:430.00px;font-size:12px;line-height:12px;color:#6e7079;transform:scaleX(1.0108);">Januar</span>
<span class="t" style="left:1432.70px;top:430.00px;font-size:12px;line-height:12px;color:#6e7079;transform:scaleX(1.0785);">April</span>
<span class="t" style="left:1548.20px;top:430.00px;font-size:12px;line-height:12px;color:#6e7079;transform:scaleX(1.0047);">Juli</span>
<span class="t" style="left:1645.50px;top:430.00px;font-size:12px;line-height:12px;color:#6e7079;transform:scaleX(1.0987);">Oktober</span>
<span class="t" style="left:1610.00px;top:316.00px;font-size:12px;line-height:12px;color:#333;">2023</span>
<span class="t" style="left:1678.70px;top:316.00px;font-size:12px;line-height:12px;color:#333;transform:scaleX(1.0224);">2024</span>
<div class="a" style="left:1716.3px;top:313.2px;width:23.2px;height:16.5px;border:1px solid #555;border-radius:9.25px"></div>
<span class="t" style="left:1722.30px;top:317.00px;font-size:12px;line-height:12px;color:#777;transform:scaleX(0.9892);">All</span>
<div class="a" style="left:1748px;top:313.2px;width:26px;height:16.5px;border:1px solid #555;border-radius:9.25px"></div>
<span class="t" style="left:1753.95px;top:317.00px;font-size:12px;line-height:12px;color:#777;transform:scaleX(1.0053);">Inv</span>
<span class="t" style="left:580.80px;top:617.00px;font-size:58px;line-height:58px;color:#000;transform:scaleX(0.9762);">1.415</span>
<span class="t" style="left:792.00px;top:575.00px;font-size:10.5px;line-height:10.5px;color:#333;transform:scaleX(1.0464);">1.830</span>
<span class="t" style="left:792.00px;top:710.00px;font-size:13.2px;line-height:13.2px;color:#222;transform:scaleX(0.9814);">1.614</span>
<span class="t" style="left:583.70px;top:865.00px;font-size:35.5px;line-height:35.5px;color:#3f8f62;transform:scaleX(0.9892);">23.762 €</span>
<span class="t" style="left:791.00px;top:866.00px;font-size:27.2px;line-height:27.2px;color:#a83246;transform:scaleX(1.1114);">-223.735 €</span>
<div class="a" style="left:1015px;top:556px;width:750px;height:230px;overflow:hidden">
<div class="a" style="left:4.5px;top:4.6px;width:762.0px;height:51.4px;background:#4f5689;"></div>
<div class="a" style="left:4.5px;top:56px;width:762.0px;height:42.5px;background:#fff;"></div>
<div class="a" style="left:4.5px;top:98.5px;width:762.0px;height:42.8px;background:#eeeeee;"></div>
<div class="a" style="left:4.5px;top:141.3px;width:762.0px;height:43.1px;background:#fff;"></div>
<div class="a" style="left:48.8px;top:4.6px;width:1px;height:51.4px;background:#fff;"></div>
<div class="a" style="left:93.9px;top:4.6px;width:1px;height:51.4px;background:#fff;"></div>
<div class="a" style="left:148.8px;top:4.6px;width:1px;height:51.4px;background:#fff;"></div>
<div class="a" style="left:203.7px;top:4.6px;width:1px;height:51.4px;background:#fff;"></div>
<div class="a" style="left:259.7px;top:4.6px;width:1px;height:51.4px;background:#fff;"></div>
<div class="a" style="left:320.8px;top:4.6px;width:1px;height:51.4px;background:#fff;"></div>
<div class="a" style="left:382.9px;top:4.6px;width:1px;height:51.4px;background:#fff;"></div>
<div class="a" style="left:445.0px;top:4.6px;width:1px;height:51.4px;background:#fff;"></div>
<div class="a" style="left:507.1px;top:4.6px;width:1px;height:51.4px;background:#fff;"></div>
<div class="a" style="left:567.0px;top:4.6px;width:1px;height:51.4px;background:#fff;"></div>
<div class="a" style="left:638.9px;top:4.6px;width:1px;height:51.4px;background:#fff;"></div>
<div class="a" style="left:697.8px;top:4.6px;width:1px;height:51.4px;background:#fff;"></div>
<div class="a" style="left:4.5px;top:30px;width:89.9px;height:1px;background:#fff;"></div>
<div class="a" style="left:4.0px;top:4.6px;width:1px;height:51.4px;background:#fff;"></div>
<div class="a" style="left:4.0px;top:56px;width:1px;height:128.4px;background:#dcdcdc;"></div>
<div class="a" style="left:93.9px;top:56px;width:1px;height:128.4px;background:#dcdcdc;"></div>
<div class="a" style="left:148.8px;top:56px;width:1px;height:128.4px;background:#dcdcdc;"></div>
<div class="a" style="left:203.7px;top:56px;width:1px;height:128.4px;background:#dcdcdc;"></div>
<div class="a" style="left:259.7px;top:56px;width:1px;height:128.4px;background:#dcdcdc;"></div>
<div class="a" style="left:320.8px;top:56px;width:1px;height:128.4px;background:#dcdcdc;"></div>
<div class="a" style="left:382.9px;top:56px;width:1px;height:128.4px;background:#dcdcdc;"></div>
<div class="a" style="left:445.0px;top:56px;width:1px;height:128.4px;background:#dcdcdc;"></div>
<div class="a" style="left:507.1px;top:56px;width:1px;height:128.4px;background:#dcdcdc;"></div>
<div class="a" style="left:567.0px;top:56px;width:1px;height:128.4px;background:#dcdcdc;"></div>
<div class="a" style="left:638.9px;top:56px;width:1px;height:128.4px;background:#dcdcdc;"></div>
<div class="a" style="left:697.8px;top:56px;width:1px;height:128.4px;background:#dcdcdc;"></div>
<div class="a" style="left:4.5px;top:55.5px;width:762.0px;height:1px;background:#dcdcdc;"></div>
<div class="a" style="left:4.5px;top:98.0px;width:762.0px;height:1px;background:#dcdcdc;"></div>
<div class="a" style="left:4.5px;top:140.8px;width:762.0px;height:1px;background:#dcdcdc;"></div>
<div class="a" style="left:4.5px;top:183.9px;width:762.0px;height:1px;background:#dcdcdc;"></div>
<div class="a" style="left:4.5px;top:55.5px;width:762.0px;height:1px;background:#fff;"></div>
</div>
<div class="a" style="left:0;top:0;width:1765px;height:1040px;overflow:hidden">
<span class="t" style="left:1068.50px;top:567.00px;font-size:12px;line-height:12px;color:#fff;font-weight:700;transform:scaleX(1.0190);">Monat</span>
<span class="t" style="left:1024.00px;top:593.00px;font-size:12px;line-height:12px;color:#fff;font-weight:700;transform:scaleX(1.0044);">Metrik</span>
<span class="t" style="left:1113.70px;top:580.00px;font-size:12px;line-height:12px;color:#fff;font-weight:700;transform:scaleX(0.9909);">Januar</span>
<span class="t" style="left:1168.60px;top:580.00px;font-size:12px;line-height:12px;color:#fff;font-weight:700;transform:scaleX(0.9801);">Februar</span>
<span class="t" style="left:1223.50px;top:580.00px;font-size:12px;line-height:12px;color:#fff;font-weight:700;transform:scaleX(1.0423);">März</span>
<span class="t" style="left:1279.50px;top:580.00px;font-size:12px;line-height:12px;color:#fff;font-weight:700;transform:scaleX(0.9691);">April</span>
<span class="t" style="left:1340.60px;top:580.00px;font-size:12px;line-height:12px;color:#fff;font-weight:700;transform:scaleX(1.0242);">Mai</span>
<span class="t" style="left:1402.70px;top:580.00px;font-size:12px;line-height:12px;color:#fff;font-weight:700;transform:scaleX(0.9849);">Juni</span>
<span class="t" style="left:1464.80px;top:580.00px;font-size:12px;line-height:12px;color:#fff;font-weight:700;transform:scaleX(0.9433);">Juli</span>
<span class="t" style="left:1526.90px;top:580.00px;font-size:12px;line-height:12px;color:#fff;font-weight:700;transform:scaleX(0.9679);">August</span>
<span class="t" style="left:1586.80px;top:580.00px;font-size:12px;line-height:12px;color:#fff;font-weight:700;transform:scaleX(1.0076);">September</span>
<span class="t" style="left:1658.70px;top:580.00px;font-size:12px;line-height:12px;color:#fff;font-weight:700;">Oktober</span>
<span class="t" style="left:1717.60px;top:580.00px;font-size:12px;line-height:12px;color:#fff;font-weight:700;">November</span>
<span class="t" style="left:1024.00px;top:619.00px;font-size:12px;line-height:12px;color:#3d5468;transform:scaleX(1.0572);">Umsatz</span>
<span class="t" style="left:1024.00px;top:636.00px;font-size:12px;line-height:12px;color:#3d5468;transform:scaleX(1.0544);">gesamt</span>
<span class="t" style="left:1024.00px;top:661.00px;font-size:12px;line-height:12px;color:#3d5468;transform:scaleX(1.0535);">Steigerung in</span>
<span class="t" style="left:1024.00px;top:678.00px;font-size:12px;line-height:12px;color:#3d5468;transform:scaleX(0.9154);">EUR</span>
<span class="t" style="left:1024.00px;top:704.00px;font-size:12px;line-height:12px;color:#3d5468;transform:scaleX(1.0535);">Steigerung in</span>
<span class="t" style="left:1024.00px;top:721.00px;font-size:12px;line-height:12px;color:#3d5468;transform:scaleX(0.8902);">%</span>
<span class="t" style="left:1112.60px;top:619.00px;font-size:12px;line-height:12px;color:#3d5468;transform:scaleX(1.0855);">279.555</span>
<span class="t" style="left:1114.70px;top:661.00px;font-size:12px;line-height:12px;color:#3d5468;transform:scaleX(1.1056);">-23.273</span>
<span class="t" style="left:1137.40px;top:704.00px;font-size:12px;line-height:12px;color:#3d5468;transform:scaleX(1.0448);">-8%</span>
<span class="t" style="left:1169.50px;top:619.00px;font-size:12px;line-height:12px;color:#3d5468;transform:scaleX(1.0394);">306.316</span>
<span class="t" style="left:1171.60px;top:661.00px;font-size:12px;line-height:12px;color:#3d5468;transform:scaleX(1.0564);">-10.722</span>
<span class="t" style="left:1192.30px;top:704.00px;font-size:12px;line-height:12px;color:#3d5468;transform:scaleX(1.0448);">-4%</span>
<span class="t" style="left:1223.50px;top:619.00px;font-size:12px;line-height:12px;color:#3d5468;transform:scaleX(1.0855);">272.846</span>
<span class="t" style="left:1225.60px;top:661.00px;font-size:12px;line-height:12px;color:#3d5468;transform:scaleX(1.1056);">-35.223</span>
<span class="t" style="left:1243.00px;top:704.00px;font-size:12px;line-height:12px;color:#3d5468;transform:scaleX(0.9852);">-12%</span>
<span class="t" style="left:1291.90px;top:619.00px;font-size:12px;line-height:12px;color:#3d5468;transform:scaleX(1.0844);">23.762</span>
<span class="t" style="left:1279.40px;top:661.00px;font-size:12px;line-height:12px;color:#3d5468;transform:scaleX(1.1040);">-223.735</span>
<span class="t" style="left:1304.10px;top:704.00px;font-size:12px;line-height:12px;color:#3d5468;transform:scaleX(0.9852);">-91%</span>
<span class="t" style="left:1386.50px;top:619.00px;font-size:12px;line-height:12px;color:#3d5468;transform:scaleX(1.0916);">0</span>
<span class="t" style="left:1341.50px;top:661.00px;font-size:12px;line-height:12px;color:#3d5468;transform:scaleX(1.1040);">-293.492</span>
<span class="t" style="left:1358.90px;top:704.00px;font-size:12px;line-height:12px;color:#3d5468;transform:scaleX(1.0061);">-100%</span>
<span class="t" style="left:1448.60px;top:619.00px;font-size:12px;line-height:12px;color:#3d5468;transform:scaleX(1.0916);">0</span>
<span class="t" style="left:1403.60px;top:661.00px;font-size:12px;line-height:12px;color:#3d5468;transform:scaleX(1.1040);">-342.959</span>
<span class="t" style="left:1421.00px;top:704.00px;font-size:12px;line-height:12px;color:#3d5468;transform:scaleX(1.0061);">-100%</span>
<span class="t" style="left:1510.70px;top:619.00px;font-size:12px;line-height:12px;color:#3d5468;transform:scaleX(1.0916);">0</span>
<span class="t" style="left:1465.70px;top:661.00px;font-size:12px;line-height:12px;color:#3d5468;transform:scaleX(1.1040);">-294.639</span>
<span class="t" style="left:1483.10px;top:704.00px;font-size:12px;line-height:12px;color:#3d5468;transform:scaleX(1.0061);">-100%</span>
<span class="t" style="left:1570.60px;top:619.00px;font-size:12px;line-height:12px;color:#3d5468;transform:scaleX(1.0916);">0</span>
<span class="t" style="left:1527.60px;top:661.00px;font-size:12px;line-height:12px;color:#3d5468;transform:scaleX(1.0617);">-304.361</span>
<span class="t" style="left:1543.00px;top:704.00px;font-size:12px;line-height:12px;color:#3d5468;transform:scaleX(1.0061);">-100%</span>
<span class="t" style="left:1642.50px;top:619.00px;font-size:12px;line-height:12px;color:#3d5468;transform:scaleX(1.0916);">0</span>
<span class="t" style="left:1597.50px;top:661.00px;font-size:12px;line-height:12px;color:#3d5468;transform:scaleX(1.1040);">-269.797</span>
<span class="t" style="left:1614.90px;top:704.00px;font-size:12px;line-height:12px;color:#3d5468;transform:scaleX(1.0061);">-100%</span>
<span class="t" style="left:1701.40px;top:619.00px;font-size:12px;line-height:12px;color:#3d5468;transform:scaleX(1.0916);">0</span>
<span class="t" style="left:1658.40px;top:661.00px;font-size:12px;line-height:12px;color:#3d5468;transform:scaleX(1.0617);">-289.143</span>
<span class="t" style="left:1673.80px;top:704.00px;font-size:12px;line-height:12px;color:#3d5468;transform:scaleX(1.0061);">-100%</span>
<span class="t" style="left:1769.60px;top:619.00px;font-size:12px;line-height:12px;color:#3d5468;transform:scaleX(1.0916);">0</span>
<span class="t" style="left:1728.60px;top:661.00px;font-size:12px;line-height:12px;color:#3d5468;transform:scaleX(1.0195);">-316.153</span>
<span class="t" style="left:1742.00px;top:704.00px;font-size:12px;line-height:12px;color:#3d5468;transform:scaleX(1.0061);">-100%</span>
</div>
<div class="a" style="left:1015px;top:766.5px;width:750px;height:16px;background:#f1f1f1;"></div>
<div class="a" style="left:1032px;top:768.5px;width:591px;height:12px;background:#c1c1c1;"></div>
<svg class="a" style="left:1021px;top:770px;" width="5" height="9" viewBox="0 0 5 9"><path d="M5 0V9L0 4.500z" fill="#a3a3a3"/></svg>
<svg class="a" style="left:1754px;top:770px;" width="5" height="9" viewBox="0 0 5 9"><path d="M0 0V9L5 4.500z" fill="#505050"/></svg>
<svg class="a" style="left:0;top:0;" width="1847" height="1040" viewBox="0 0 1847 1040"><path d="M1095.6 982.50H1346.4" stroke="#e0e6f1" stroke-width="1" shape-rendering="crispEdges"/><path d="M1095.6 965.90H1346.4" stroke="#e0e6f1" stroke-width="1" shape-rendering="crispEdges"/><path d="M1095.6 949.30H1346.4" stroke="#e0e6f1" stroke-width="1" shape-rendering="crispEdges"/><path d="M1095.6 932.70H1346.4" stroke="#e0e6f1" stroke-width="1" shape-rendering="crispEdges"/><path d="M1095.6 916.10H1346.4" stroke="#e0e6f1" stroke-width="1" shape-rendering="crispEdges"/><path d="M1092.3 995.78H1095.6" stroke="#7d7f88" stroke-width="1" shape-rendering="crispEdges"/><path d="M1092.3 992.46H1095.6" stroke="#7d7f88" stroke-width="1" shape-rendering="crispEdges"/><path d="M1092.3 989.14H1095.6" stroke="#7d7f88" stroke-width="1" shape-rendering="crispEdges"/><path d="M1092.3 985.82H1095.6" stroke="#7d7f88" stroke-width="1" shape-rendering="crispEdges"/><path d="M1092.3 979.18H1095.6" stroke="#7d7f88" stroke-width="1" shape-rendering="crispEdges"/><path d="M1092.3 975.86H1095.6" stroke="#7d7f88" stroke-width="1" shape-rendering="crispEdges"/><path d="M1092.3 972.54H1095.6" stroke="#7d7f88" stroke-width="1" shape-rendering="crispEdges"/><path d="M1092.3 969.22H1095.6" stroke="#7d7f88" stroke-width="1" shape-rendering="crispEdges"/><path d="M1092.3 962.58H1095.6" stroke="#7d7f88" stroke-width="1" shape-rendering="crispEdges"/><path d="M1092.3 959.26H1095.6" stroke="#7d7f88" stroke-width="1" shape-rendering="crispEdges"/><path d="M1092.3 955.94H1095.6" stroke="#7d7f88" stroke-width="1" shape-rendering="crispEdges"/><path d="M1092.3 952.62H1095.6" stroke="#7d7f88" stroke-width="1" shape-rendering="crispEdges"/><path d="M1092.3 945.98H1095.6" stroke="#7d7f88" stroke-width="1" shape-rendering="crispEdges"/><path d="M1092.3 942.66H1095.6" stroke="#7d7f88" stroke-width="1" shape-rendering="crispEdges"/><path d="M1092.3 939.34H1095.6" stroke="#7d7f88" stroke-width="1" shape-rendering="crispEdges"/><path d="M1092.3 936.02H1095.6" stroke="#7d7f88" stroke-width="1" shape-rendering="crispEdges"/><path d="M1092.3 929.38H1095.6" stroke="#7d7f88" stroke-width="1" shape-rendering="crispEdges"/><path d="M1092.3 926.06H1095.6" stroke="#7d7f88" stroke-width="1" shape-rendering="crispEdges"/><path d="M1092.3 922.74H1095.6" stroke="#7d7f88" stroke-width="1" shape-rendering="crispEdges"/><path d="M1092.3 919.42H1095.6" stroke="#7d7f88" stroke-width="1" shape-rendering="crispEdges"/><rect x="1098.20" y="931.00" width="6.9" height="68.10" fill="#454e7c"/><rect x="1119.20" y="926.00" width="6.9" height="73.10" fill="#454e7c"/><rect x="1140.10" y="927.00" width="6.9" height="72.10" fill="#454e7c"/><rect x="1161.10" y="943.60" width="6.9" height="55.50" fill="#454e7c"/><rect x="1182.10" y="930.80" width="6.9" height="68.30" fill="#454e7c"/><rect x="1202.80" y="921.20" width="6.9" height="77.90" fill="#454e7c"/><rect x="1223.80" y="932.00" width="6.9" height="67.10" fill="#454e7c"/><rect x="1244.50" y="927.00" width="6.9" height="72.10" fill="#454e7c"/><rect x="1265.40" y="933.60" width="6.9" height="65.50" fill="#454e7c"/><rect x="1286.20" y="928.40" width="6.9" height="70.70" fill="#454e7c"/><rect x="1307.10" y="924.30" width="6.9" height="74.80" fill="#454e7c"/><rect x="1328.10" y="924.60" width="6.9" height="74.50" fill="#454e7c"/><rect x="1106.50" y="933.60" width="6.9" height="65.50" fill="#5ac189"/><rect x="1127.50" y="924.10" width="6.9" height="75.00" fill="#5ac189"/><rect x="1148.50" y="937.90" width="6.9" height="61.20" fill="#5ac189"/><rect x="1169.40" y="992.00" width="6.9" height="7.10" fill="#5ac189"/><path d="M1095.6 999.1H1346.4" stroke="#6e7079" stroke-width="1" shape-rendering="crispEdges"/><path d="M1095.60 999.1V1004.1" stroke="#6e7079" stroke-width="1" shape-rendering="crispEdges"/><path d="M1220.20 999.1V1004.1" stroke="#6e7079" stroke-width="1" shape-rendering="crispEdges"/><path d="M1346.40 999.1V1004.1" stroke="#6e7079" stroke-width="1" shape-rendering="crispEdges"/></svg>
<span class="t" style="left:1069.30px;top:992.00px;font-size:12px;line-height:12px;color:#6e7079;transform:scaleX(1.0487);">0 €</span>
<span class="t" style="left:1039.80px;top:976.00px;font-size:12px;line-height:12px;color:#6e7079;transform:scaleX(1.0060);">20.000 €</span>
<span class="t" style="left:1039.80px;top:959.00px;font-size:12px;line-height:12px;color:#6e7079;transform:scaleX(1.0060);">40.000 €</span>
<span class="t" style="left:1039.80px;top:943.00px;font-size:12px;line-height:12px;color:#6e7079;transform:scaleX(1.0060);">60.000 €</span>
<span class="t" style="left:1039.80px;top:926.00px;font-size:12px;line-height:12px;color:#6e7079;transform:scaleX(1.0060);">80.000 €</span>
<span class="t" style="left:1032.50px;top:909.00px;font-size:12px;line-height:12px;color:#6e7079;transform:scaleX(1.0170);">100.000 €</span>
<span class="t" style="left:1109.00px;top:1006.00px;font-size:12px;line-height:12px;color:#6e7079;transform:scaleX(1.0054);">Januar</span>
<span class="t" style="left:1232.80px;top:1006.00px;font-size:12px;line-height:12px;color:#6e7079;transform:scaleX(0.9936);">Juli</span>
<div class="a" style="left:1004.1px;top:883.4px;width:24.8px;height:13.8px;background:#454e7c;border-radius:3px"></div>
<span class="t" style="left:1034.40px;top:884.00px;font-size:12px;line-height:12px;color:#333;transform:scaleX(1.0811);">Rohertrag Vorjahr</span>
<div class="a" style="left:1146.3px;top:883.4px;width:25px;height:13.8px;background:#5ac189;border-radius:3px"></div>
<div class="a" style="left:1176.80px;top:882.00px;width:47.00px;height:18px;overflow:hidden"><span class="t" style="left:0;top:2px;font-size:12px;line-height:12px;color:#333;transform:scaleX(1.0492);">Rohertrag</span></div>
<svg class="a" style="left:1234.5px;top:883.8px;" width="8.3" height="13" viewBox="0 0 8.3 13"><path d="M8.300 0V13L0 6.500z" fill="#aaa"/></svg>
<span class="t" style="left:1253.50px;top:884.00px;font-size:12px;line-height:12px;color:#333;transform:scaleX(1.1086);">1/2</span>
<svg class="a" style="left:1282.6px;top:883.8px;" width="9.1" height="13" viewBox="0 0 9.1 13"><path d="M0 0V13L9.100 6.500z" fill="#2f4554"/></svg>
<div class="a" style="left:1301.7px;top:881.5px;width:22.5px;height:15.8px;border:1px solid #555;border-radius:8.9px"></div>
<span class="t" style="left:1307.35px;top:885.00px;font-size:12px;line-height:12px;color:#777;transform:scaleX(0.9892);">All</span>
<div class="a" style="left:1333px;top:881.5px;width:25.7px;height:15.8px;border:1px solid #555;border-radius:8.9px"></div>
<span class="t" style="left:1338.80px;top:885.00px;font-size:12px;line-height:12px;color:#777;transform:scaleX(1.0053);">Inv</span>
<svg class="a" style="left:0;top:0;" width="1847" height="1040" viewBox="0 0 1847 1040"><path d="M1497.6 987.25H1761.6" stroke="#e0e6f1" stroke-width="1" shape-rendering="crispEdges"/><path d="M1497.6 975.40H1761.6" stroke="#e0e6f1" stroke-width="1" shape-rendering="crispEdges"/><path d="M1497.6 963.55H1761.6" stroke="#e0e6f1" stroke-width="1" shape-rendering="crispEdges"/><path d="M1497.6 951.70H1761.6" stroke="#e0e6f1" stroke-width="1" shape-rendering="crispEdges"/><path d="M1497.6 939.85H1761.6" stroke="#e0e6f1" stroke-width="1" shape-rendering="crispEdges"/><path d="M1497.6 928.00H1761.6" stroke="#e0e6f1" stroke-width="1" shape-rendering="crispEdges"/><path d="M1497.6 916.00H1761.6" stroke="#e0e6f1" stroke-width="1" shape-rendering="crispEdges"/><path d="M1494.4 996.73H1497.6" stroke="#7d7f88" stroke-width="1" shape-rendering="crispEdges"/><path d="M1494.4 994.36H1497.6" stroke="#7d7f88" stroke-width="1" shape-rendering="crispEdges"/><path d="M1494.4 991.99H1497.6" stroke="#7d7f88" stroke-width="1" shape-rendering="crispEdges"/><path d="M1494.4 989.62H1497.6" stroke="#7d7f88" stroke-width="1" shape-rendering="crispEdges"/><path d="M1494.4 984.88H1497.6" stroke="#7d7f88" stroke-width="1" shape-rendering="crispEdges"/><path d="M1494.4 982.51H1497.6" stroke="#7d7f88" stroke-width="1" shape-rendering="crispEdges"/><path d="M1494.4 980.14H1497.6" stroke="#7d7f88" stroke-width="1" shape-rendering="crispEdges"/><path d="M1494.4 977.77H1497.6" stroke="#7d7f88" stroke-width="1" shape-rendering="crispEdges"/><path d="M1494.4 973.03H1497.6" stroke="#7d7f88" stroke-width="1" shape-rendering="crispEdges"/><path d="M1494.4 970.66H1497.6" stroke="#7d7f88" stroke-width="1" shape-rendering="crispEdges"/><path d="M1494.4 968.29H1497.6" stroke="#7d7f88" stroke-width="1" shape-rendering="crispEdges"/><path d="M1494.4 965.92H1497.6" stroke="#7d7f88" stroke-width="1" shape-rendering="crispEdges"/><path d="M1494.4 961.18H1497.6" stroke="#7d7f88" stroke-width="1" shape-rendering="crispEdges"/><path d="M1494.4 958.81H1497.6" stroke="#7d7f88" stroke-width="1" shape-rendering="crispEdges"/><path d="M1494.4 956.44H1497.6" stroke="#7d7f88" stroke-width="1" shape-rendering="crispEdges"/><path d="M1494.4 954.07H1497.6" stroke="#7d7f88" stroke-width="1" shape-rendering="crispEdges"/><path d="M1494.4 949.33H1497.6" stroke="#7d7f88" stroke-width="1" shape-rendering="crispEdges"/><path d="M1494.4 946.96H1497.6" stroke="#7d7f88" stroke-width="1" shape-rendering="crispEdges"/><path d="M1494.4 944.59H1497.6" stroke="#7d7f88" stroke-width="1" shape-rendering="crispEdges"/><path d="M1494.4 942.22H1497.6" stroke="#7d7f88" stroke-width="1" shape-rendering="crispEdges"/><path d="M1494.4 937.48H1497.6" stroke="#7d7f88" stroke-width="1" shape-rendering="crispEdges"/><path d="M1494.4 935.11H1497.6" stroke="#7d7f88" stroke-width="1" shape-rendering="crispEdges"/><path d="M1494.4 932.74H1497.6" stroke="#7d7f88" stroke-width="1" shape-rendering="crispEdges"/><path d="M1494.4 930.37H1497.6" stroke="#7d7f88" stroke-width="1" shape-rendering="crispEdges"/><path d="M1494.4 925.63H1497.6" stroke="#7d7f88" stroke-width="1" shape-rendering="crispEdges"/><path d="M1494.4 923.26H1497.6" stroke="#7d7f88" stroke-width="1" shape-rendering="crispEdges"/><path d="M1494.4 920.89H1497.6" stroke="#7d7f88" stroke-width="1" shape-rendering="crispEdges"/><path d="M1494.4 918.52H1497.6" stroke="#7d7f88" stroke-width="1" shape-rendering="crispEdges"/><rect x="1500.80" y="935.00" width="7.3" height="64.10" fill="#5ac189"/><rect x="1522.60" y="933.30" width="7.3" height="65.80" fill="#5ac189"/><rect x="1544.60" y="932.30" width="7.3" height="66.80" fill="#5ac189"/><rect x="1566.40" y="935.00" width="7.3" height="64.10" fill="#5ac189"/><rect x="1588.40" y="932.60" width="7.3" height="66.50" fill="#5ac189"/><rect x="1610.20" y="934.10" width="7.3" height="65.00" fill="#5ac189"/><rect x="1632.20" y="934.10" width="7.3" height="65.00" fill="#5ac189"/><rect x="1654.30" y="931.60" width="7.3" height="67.50" fill="#5ac189"/><rect x="1676.30" y="930.10" width="7.3" height="69.00" fill="#5ac189"/><rect x="1698.00" y="929.40" width="7.3" height="69.70" fill="#5ac189"/><rect x="1720.10" y="931.60" width="7.3" height="67.50" fill="#5ac189"/><rect x="1742.10" y="928.60" width="7.3" height="70.50" fill="#5ac189"/><rect x="1509.30" y="932.10" width="7.3" height="67.00" fill="#454e7c"/><rect x="1531.10" y="929.40" width="7.3" height="69.70" fill="#454e7c"/><rect x="1553.10" y="935.30" width="7.3" height="63.80" fill="#454e7c"/><rect x="1575.10" y="917.20" width="7.3" height="81.90" fill="#454e7c"/><path d="M1497.6 999.1H1761.6" stroke="#6e7079" stroke-width="1" shape-rendering="crispEdges"/><path d="M1497.60 999.1V1004.1" stroke="#6e7079" stroke-width="1" shape-rendering="crispEdges"/><path d="M1607.70 999.1V1004.1" stroke="#6e7079" stroke-width="1" shape-rendering="crispEdges"/><path d="M1717.60 999.1V1004.1" stroke="#6e7079" stroke-width="1" shape-rendering="crispEdges"/><path d="M1761.60 999.1V1004.1" stroke="#6e7079" stroke-width="1" shape-rendering="crispEdges"/></svg>
<span class="t" style="left:1455.50px;top:980.00px;font-size:12px;line-height:12px;color:#6e7079;transform:scaleX(0.9844);">5,00%</span>
<span class="t" style="left:1448.10px;top:969.00px;font-size:12px;line-height:12px;color:#6e7079;transform:scaleX(1.0048);">10,00%</span>
<span class="t" style="left:1448.10px;top:957.00px;font-size:12px;line-height:12px;color:#6e7079;transform:scaleX(1.0048);">15,00%</span>
<span class="t" style="left:1448.10px;top:945.00px;font-size:12px;line-height:12px;color:#6e7079;transform:scaleX(1.0048);">20,00%</span>
<span class="t" style="left:1448.10px;top:933.00px;font-size:12px;line-height:12px;color:#6e7079;transform:scaleX(1.0048);">25,00%</span>
<span class="t" style="left:1448.10px;top:921.00px;font-size:12px;line-height:12px;color:#6e7079;transform:scaleX(1.0048);">30,00%</span>
<span class="t" style="left:1511.20px;top:1006.00px;font-size:12px;line-height:12px;color:#6e7079;transform:scaleX(1.0135);">Januar</span>
<span class="t" style="left:1619.60px;top:1006.00px;font-size:12px;line-height:12px;color:#6e7079;transform:scaleX(1.0129);">Juni</span>
<span class="t" style="left:1701.80px;top:1006.00px;font-size:12px;line-height:12px;color:#6e7079;transform:scaleX(1.0802);">November</span>
<div class="a" style="left:1419.2px;top:883.6px;width:24.5px;height:13.6px;background:#5ac189;border-radius:3px"></div>
<span class="t" style="left:1449.40px;top:884.00px;font-size:12px;line-height:12px;color:#333;transform:scaleX(1.0741);">Rohertrag Vorjahr in %</span>
<div class="a" style="left:1590px;top:883.6px;width:24.7px;height:13.6px;background:#454e7c;border-radius:3px"></div>
<div class="a" style="left:1620.00px;top:882.00px;width:18.70px;height:18px;overflow:hidden"><span class="t" style="left:0;top:2px;font-size:12px;line-height:12px;color:#333;transform:scaleX(1.0492);">Rohertrag</span></div>
<svg class="a" style="left:1649px;top:883.8px;" width="9" height="13" viewBox="0 0 9 13"><path d="M9 0V13L0 6.500z" fill="#aaa"/></svg>
<span class="t" style="left:1668.80px;top:884.00px;font-size:12px;line-height:12px;color:#333;transform:scaleX(1.0906);">1/2</span>
<svg class="a" style="left:1697.5px;top:883.8px;" width="9.2" height="13" viewBox="0 0 9.2 13"><path d="M0 0V13L9.200 6.500z" fill="#2f4554"/></svg>
<div class="a" style="left:1716.6px;top:881.5px;width:22.2px;height:15.8px;border:1px solid #555;border-radius:8.9px"></div>
<span class="t" style="left:1722.10px;top:885.00px;font-size:12px;line-height:12px;color:#777;transform:scaleX(0.9892);">All</span>
<div class="a" style="left:1748.5px;top:881.5px;width:25.5px;height:15.8px;border:1px solid #555;border-radius:8.9px"></div>
<span class="t" style="left:1754.20px;top:885.00px;font-size:12px;line-height:12px;color:#777;transform:scaleX(1.0053);">Inv</span>
</div></body></html>
